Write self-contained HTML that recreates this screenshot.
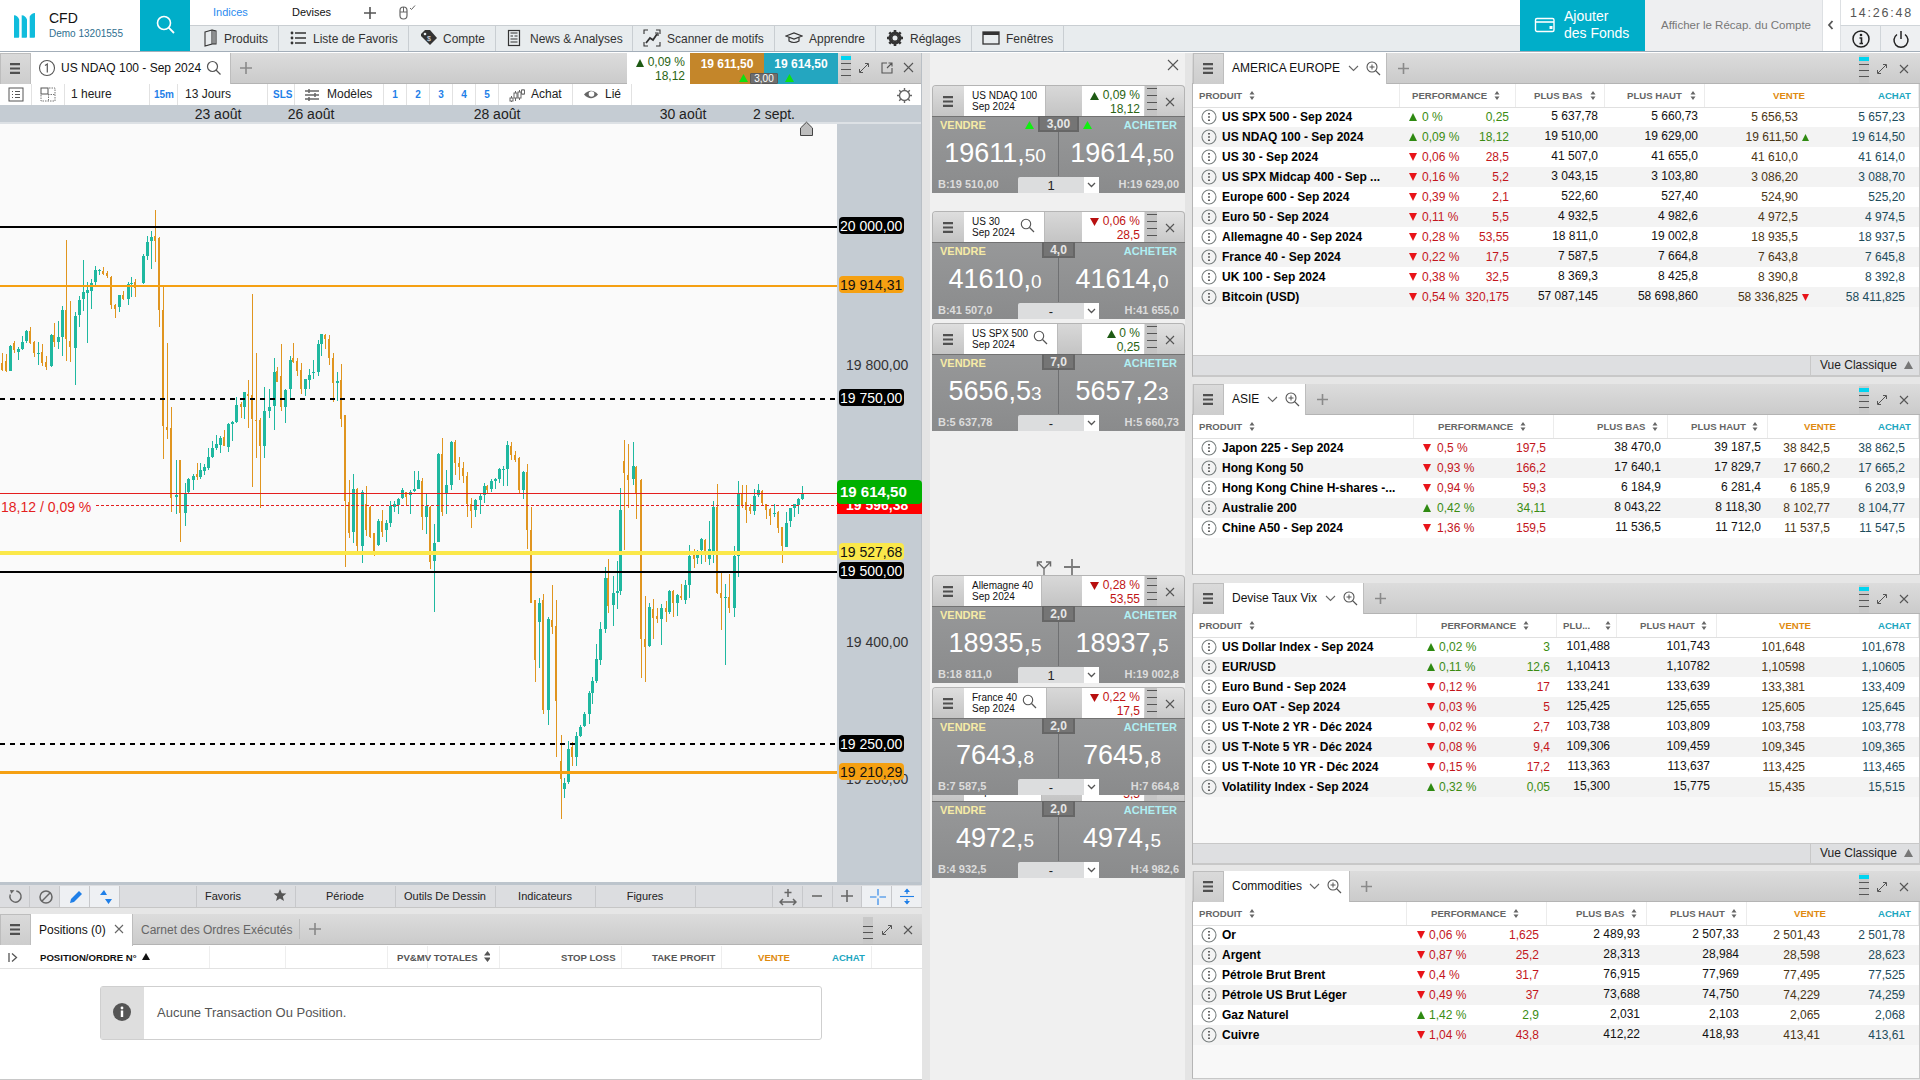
<!DOCTYPE html><html><head><meta charset="utf-8"><style>
*{margin:0;padding:0;box-sizing:border-box}
html,body{width:1920px;height:1080px;overflow:hidden;background:#e3e3e3;font-family:"Liberation Sans",sans-serif;color:#000}
div{position:absolute}
.b{font-weight:bold}
</style></head><body>
<div style="left:0px;top:52px;width:922px;height:856px;background:#fafafa"></div>
<div style="left:0px;top:53px;width:922px;height:31px;background:linear-gradient(#dcdcdc,#cbcbcb);border-bottom:1px solid #b4b4b4"></div>
<div style="left:0px;top:53px;width:31px;height:31px;background:linear-gradient(#dadada,#cdcdcd);border:1px solid #bdbdbd;border-bottom:none"></div>
<svg style="position:absolute;left:9px;top:63px;" width="14" height="13" viewBox="0 0 14 13"><path d="M1,1.2H11M1,5.5H11M1,9.8H11" stroke="#505050" stroke-width="2.2"/></svg>
<div style="left:31px;top:53px;width:200px;height:31px;background:#fff;border-right:1px solid #bdbdbd"></div>
<svg style="position:absolute;left:38px;top:59px;" width="18" height="18" viewBox="0 0 18 18"><circle cx="9" cy="9" r="7.5" fill="none" stroke="#555" stroke-width="1.1"/><path d="M7,6.5 L9.3,5 V13.5" fill="none" stroke="#555" stroke-width="1.2"/></svg>
<div style="left:61px;top:61px;white-space:nowrap;font-size:12px;color:#111;line-height:15px">US NDAQ 100 - Sep 2024</div>
<svg style="position:absolute;left:206px;top:60px;" width="16" height="16" viewBox="0 0 16 16"><circle cx="6.5" cy="6.5" r="5" fill="none" stroke="#555" stroke-width="1.2"/><line x1="10" y1="10" x2="14.5" y2="14.5" stroke="#555" stroke-width="1.3"/></svg>
<svg style="position:absolute;left:240px;top:62px;" width="12" height="12" viewBox="0 0 12 12"><path d="M6.0,0V12M0,6.0H12" stroke="#8a8a8a" stroke-width="1.6"/></svg>
<div style="left:627px;top:53px;width:63px;height:31px;background:#fff"></div>
<svg style="position:absolute;left:636px;top:59px;" width="8" height="8" viewBox="0 0 8 8"><path d="M0,8 L4,0 L8,8 Z" fill="#1e5a14"/></svg>
<div style="left:627px;top:56px;white-space:nowrap;font-size:12px;color:#2a6412;line-height:13px;width:58px;text-align:right">0,09 %</div>
<div style="left:627px;top:70px;white-space:nowrap;font-size:12px;color:#2a6412;line-height:13px;width:58px;text-align:right">18,12</div>
<div style="left:690px;top:53px;width:74px;height:31px;background:#c4862a"></div>
<div style="left:690px;top:57px;white-space:nowrap;font-size:12px;color:#fff;font-weight:bold;width:74px;text-align:center;line-height:15px">19 611,50</div>
<div style="left:764px;top:53px;width:74px;height:31px;background:#24a6c0"></div>
<div style="left:764px;top:57px;white-space:nowrap;font-size:12px;color:#fff;font-weight:bold;width:74px;text-align:center;line-height:15px">19 614,50</div>
<svg style="position:absolute;left:739px;top:74px;" width="9" height="8" viewBox="0 0 9 8"><path d="M0,8 L4.5,0 L9,8 Z" fill="#10e010"/></svg>
<svg style="position:absolute;left:785px;top:74px;" width="9" height="8" viewBox="0 0 9 8"><path d="M0,8 L4.5,0 L9,8 Z" fill="#10e010"/></svg>
<div style="left:750px;top:73px;width:28px;height:11px;background:#6e6e6e;border:1px solid #5a5a5a;border-radius:1px"></div>
<div style="left:750px;top:73px;white-space:nowrap;font-size:10px;color:#fff;width:28px;text-align:center;line-height:11px">3,00</div>
<div style="left:841px;top:54px;width:10px;height:28px;background:#c8c8c8"></div>
<div style="left:841px;top:56px;width:10px;height:4px;background:#00d4f0"></div>
<div style="left:841px;top:63px;width:10px;height:1px;background:#555"></div>
<div style="left:841px;top:69px;width:10px;height:1px;background:#555"></div>
<div style="left:841px;top:75px;width:10px;height:1px;background:#555"></div>
<svg style="position:absolute;left:858px;top:62px;" width="12" height="12" viewBox="0 0 12 12"><path d="M2,10 L10,2 M7,1.5H10.5V5 M1.5,7V10.5H5" fill="none" stroke="#555" stroke-width="1"/></svg>
<svg style="position:absolute;left:880px;top:61px;" width="14" height="14" viewBox="0 0 14 14"><path d="M7,2H2V12H12V7 M7,7 L12,2 M8.5,2H12V5.5" fill="none" stroke="#555" stroke-width="1.1"/></svg>
<svg style="position:absolute;left:903px;top:62px;" width="11" height="11" viewBox="0 0 11 11"><path d="M1,1 L10,10 M10,1 L1,10" stroke="#555" stroke-width="1.1"/></svg>
<div style="left:0px;top:84px;width:922px;height:21px;background:#fff"></div>
<div style="left:31px;top:84px;width:1px;height:21px;background:#e2e2e2"></div>
<div style="left:64px;top:84px;width:1px;height:21px;background:#e2e2e2"></div>
<div style="left:149px;top:84px;width:1px;height:21px;background:#e2e2e2"></div>
<div style="left:177px;top:84px;width:1px;height:21px;background:#e2e2e2"></div>
<div style="left:267px;top:84px;width:1px;height:21px;background:#e2e2e2"></div>
<div style="left:294px;top:84px;width:1px;height:21px;background:#e2e2e2"></div>
<div style="left:383px;top:84px;width:1px;height:21px;background:#e2e2e2"></div>
<div style="left:406px;top:84px;width:1px;height:21px;background:#e2e2e2"></div>
<div style="left:429px;top:84px;width:1px;height:21px;background:#e2e2e2"></div>
<div style="left:452px;top:84px;width:1px;height:21px;background:#e2e2e2"></div>
<div style="left:475px;top:84px;width:1px;height:21px;background:#e2e2e2"></div>
<div style="left:498px;top:84px;width:1px;height:21px;background:#e2e2e2"></div>
<div style="left:572px;top:84px;width:1px;height:21px;background:#e2e2e2"></div>
<div style="left:631px;top:84px;width:1px;height:21px;background:#e2e2e2"></div>
<svg style="position:absolute;left:8px;top:87px;" width="16" height="15" viewBox="0 0 16 15"><rect x="1" y="1" width="14" height="13" fill="none" stroke="#555" stroke-width="1"/><path d="M4,4.5H5M7,4.5H12M4,7.5H5M7,7.5H12M4,10.5H5M7,10.5H12" stroke="#555" stroke-width="1"/></svg>
<svg style="position:absolute;left:40px;top:87px;" width="17" height="15" viewBox="0 0 17 15"><rect x="1" y="1" width="7" height="6" fill="none" stroke="#555" stroke-width="1"/><path d="M9,1H15V14H1V8 M8,7.5H15 M8.5,7V14" fill="none" stroke="#777" stroke-width="1" stroke-dasharray="1.5,1"/></svg>
<div style="left:71px;top:87px;white-space:nowrap;font-size:12px;color:#222;line-height:15px">1 heure</div>
<div style="left:154px;top:89px;white-space:nowrap;font-size:10px;color:#1f7fe8;font-weight:bold;line-height:12px">15m</div>
<div style="left:185px;top:87px;white-space:nowrap;font-size:12px;color:#222;line-height:15px">13 Jours</div>
<div style="left:273px;top:89px;white-space:nowrap;font-size:10px;color:#1f7fe8;font-weight:bold;line-height:12px">SLS</div>
<svg style="position:absolute;left:304px;top:88px;" width="17" height="14" viewBox="0 0 17 14"><path d="M1,3H15M1,7H15M1,11H15" stroke="#666" stroke-width="1.3"/><path d="M5,1V5M11,5V9M5,9V13" stroke="#666" stroke-width="1.5"/></svg>
<div style="left:327px;top:87px;white-space:nowrap;font-size:12px;color:#222;line-height:15px">Modèles</div>
<div style="left:385px;top:89px;white-space:nowrap;font-size:10px;color:#1f7fe8;font-weight:bold;width:20px;text-align:center;line-height:12px">1</div>
<div style="left:408px;top:89px;white-space:nowrap;font-size:10px;color:#1f7fe8;font-weight:bold;width:20px;text-align:center;line-height:12px">2</div>
<div style="left:431px;top:89px;white-space:nowrap;font-size:10px;color:#1f7fe8;font-weight:bold;width:20px;text-align:center;line-height:12px">3</div>
<div style="left:454px;top:89px;white-space:nowrap;font-size:10px;color:#1f7fe8;font-weight:bold;width:20px;text-align:center;line-height:12px">4</div>
<div style="left:477px;top:89px;white-space:nowrap;font-size:10px;color:#1f7fe8;font-weight:bold;width:20px;text-align:center;line-height:12px">5</div>
<svg style="position:absolute;left:509px;top:87px;" width="17" height="16" viewBox="0 0 17 16"><path d="M2.5,9V15 M6.5,4V14 M10.5,3V13 M14,2V8" stroke="#666" stroke-width="1"/><rect x="1" y="11" width="3" height="3" fill="#fff" stroke="#666"/><rect x="5" y="6" width="3" height="5" fill="#fff" stroke="#666"/><rect x="9" y="5" width="3" height="6" fill="#fff" stroke="#666"/><rect x="12.5" y="3" width="3" height="4" fill="#fff" stroke="#666"/></svg>
<div style="left:531px;top:87px;white-space:nowrap;font-size:12px;color:#222;line-height:15px">Achat</div>
<svg style="position:absolute;left:583px;top:88px;" width="16" height="13" viewBox="0 0 16 13"><path d="M1,6.5 Q8,-1 15,6.5 Q8,14 1,6.5 Z" fill="#666"/><circle cx="8.5" cy="6" r="2.8" fill="#fff"/></svg>
<div style="left:605px;top:87px;white-space:nowrap;font-size:12px;color:#222;line-height:15px">Lié</div>
<svg style="position:absolute;left:896px;top:87px;" width="17" height="17" viewBox="0 0 17 17"><circle cx="8.5" cy="8.5" r="5" fill="none" stroke="#666" stroke-width="1.4"/><path d="M8.5,1V4M8.5,13V16M1,8.5H4M13,8.5H16M3.2,3.2L5.2,5.2M11.8,11.8L13.8,13.8M13.8,3.2L11.8,5.2M5.2,11.8L3.2,13.8" stroke="#666" stroke-width="1.4"/></svg>
<div style="left:0px;top:105px;width:922px;height:17px;background:#c5ccd3"></div>
<div style="left:178px;top:106px;white-space:nowrap;font-size:14px;color:#222;width:80px;text-align:center;line-height:17px">23 août</div>
<div style="left:271px;top:106px;white-space:nowrap;font-size:14px;color:#222;width:80px;text-align:center;line-height:17px">26 août</div>
<div style="left:457px;top:106px;white-space:nowrap;font-size:14px;color:#222;width:80px;text-align:center;line-height:17px">28 août</div>
<div style="left:643px;top:106px;white-space:nowrap;font-size:14px;color:#222;width:80px;text-align:center;line-height:17px">30 août</div>
<div style="left:734px;top:106px;white-space:nowrap;font-size:14px;color:#222;width:80px;text-align:center;line-height:17px">2 sept.</div>
<div style="left:0px;top:122px;width:922px;height:2px;background:#dde1e5"></div>
<div style="left:0px;top:124px;width:837px;height:758px;background:#fafafa"></div>
<div style="left:837px;top:124px;width:85px;height:758px;background:#c5ccd3"></div>
<div style="left:921px;top:52px;width:1px;height:856px;background:#b9bfc5"></div>
<svg style="position:absolute;left:0;top:0" width="837" height="883" viewBox="0 0 837 883" shape-rendering="crispEdges"><rect x="2" y="353.0" width="1" height="18.1" fill="#e0951f"/><rect x="1" y="363.3" width="2" height="6.5" fill="#e0951f"/><rect x="6" y="354.3" width="1" height="18.1" fill="#e0951f"/><rect x="5" y="360.7" width="2" height="10.4" fill="#e0951f"/><rect x="10" y="345.2" width="1" height="25.9" fill="#1fb8a0"/><rect x="9" y="345.7" width="3" height="24.9" fill="#1fb8a0"/><rect x="14" y="341.3" width="1" height="11.7" fill="#e0951f"/><rect x="13" y="342.6" width="2" height="7.8" fill="#e0951f"/><rect x="18" y="346.5" width="1" height="13.0" fill="#1fb8a0"/><rect x="17" y="349.1" width="3" height="2.6" fill="#1fb8a0"/><rect x="22" y="336.1" width="1" height="14.3" fill="#1fb8a0"/><rect x="21" y="342.1" width="3" height="7.0" fill="#1fb8a0"/><rect x="26" y="329.6" width="1" height="13.0" fill="#1fb8a0"/><rect x="25" y="330.9" width="3" height="10.4" fill="#1fb8a0"/><rect x="30" y="327.0" width="1" height="16.9" fill="#e0951f"/><rect x="29" y="330.9" width="2" height="11.7" fill="#e0951f"/><rect x="34" y="341.3" width="1" height="15.6" fill="#e0951f"/><rect x="33" y="342.1" width="2" height="10.9" fill="#e0951f"/><rect x="38" y="342.1" width="1" height="22.6" fill="#1fb8a0"/><rect x="37" y="353.0" width="3" height="1.3" fill="#1fb8a0"/><rect x="42" y="343.9" width="1" height="22.0" fill="#e0951f"/><rect x="41" y="351.7" width="2" height="11.7" fill="#e0951f"/><rect x="46" y="355.6" width="1" height="14.3" fill="#e0951f"/><rect x="45" y="362.0" width="2" height="5.2" fill="#e0951f"/><rect x="51" y="334.3" width="1" height="32.9" fill="#1fb8a0"/><rect x="50" y="335.3" width="3" height="31.1" fill="#1fb8a0"/><rect x="54" y="323.2" width="1" height="23.3" fill="#e0951f"/><rect x="53" y="334.8" width="2" height="7.3" fill="#e0951f"/><rect x="58" y="320.6" width="1" height="28.5" fill="#1fb8a0"/><rect x="57" y="336.9" width="3" height="5.2" fill="#1fb8a0"/><rect x="62" y="306.3" width="1" height="49.3" fill="#1fb8a0"/><rect x="61" y="310.2" width="3" height="26.7" fill="#1fb8a0"/><rect x="66" y="240.2" width="1" height="120.6" fill="#e0951f"/><rect x="65" y="310.2" width="2" height="28.5" fill="#e0951f"/><rect x="70" y="301.1" width="1" height="60.9" fill="#e0951f"/><rect x="69" y="341.3" width="2" height="5.2" fill="#e0951f"/><rect x="75" y="311.5" width="1" height="73.1" fill="#1fb8a0"/><rect x="74" y="315.9" width="3" height="31.9" fill="#1fb8a0"/><rect x="79" y="295.9" width="1" height="31.1" fill="#1fb8a0"/><rect x="78" y="299.8" width="3" height="15.6" fill="#1fb8a0"/><rect x="83" y="260.2" width="1" height="50.8" fill="#1fb8a0"/><rect x="82" y="292.0" width="3" height="7.0" fill="#1fb8a0"/><rect x="87" y="281.7" width="1" height="60.9" fill="#1fb8a0"/><rect x="86" y="290.2" width="3" height="2.6" fill="#1fb8a0"/><rect x="91" y="279.1" width="1" height="29.8" fill="#1fb8a0"/><rect x="90" y="283.0" width="3" height="7.8" fill="#1fb8a0"/><rect x="95" y="266.1" width="1" height="18.9" fill="#1fb8a0"/><rect x="94" y="269.5" width="3" height="12.2" fill="#1fb8a0"/><rect x="99" y="268.7" width="1" height="6.5" fill="#1fb8a0"/><rect x="98" y="269.5" width="3" height="1.0" fill="#1fb8a0"/><rect x="103" y="266.9" width="1" height="7.8" fill="#e0951f"/><rect x="102" y="270.5" width="2" height="3.4" fill="#e0951f"/><rect x="107" y="271.3" width="1" height="6.5" fill="#e0951f"/><rect x="106" y="272.6" width="2" height="3.1" fill="#e0951f"/><rect x="111" y="275.7" width="1" height="33.2" fill="#e0951f"/><rect x="110" y="276.5" width="2" height="28.5" fill="#e0951f"/><rect x="115" y="303.7" width="1" height="14.3" fill="#e0951f"/><rect x="114" y="305.0" width="2" height="3.9" fill="#e0951f"/><rect x="119" y="294.6" width="1" height="17.4" fill="#1fb8a0"/><rect x="118" y="295.2" width="3" height="11.7" fill="#1fb8a0"/><rect x="123" y="290.7" width="1" height="9.1" fill="#e0951f"/><rect x="122" y="294.6" width="2" height="3.9" fill="#e0951f"/><rect x="128" y="282.4" width="1" height="22.6" fill="#1fb8a0"/><rect x="127" y="283.5" width="3" height="15.0" fill="#1fb8a0"/><rect x="131" y="276.5" width="1" height="20.7" fill="#1fb8a0"/><rect x="130" y="283.0" width="3" height="1.3" fill="#1fb8a0"/><rect x="135" y="279.1" width="1" height="17.4" fill="#e0951f"/><rect x="134" y="282.4" width="2" height="5.7" fill="#e0951f"/><rect x="143" y="254.4" width="1" height="29.8" fill="#1fb8a0"/><rect x="142" y="255.7" width="3" height="27.7" fill="#1fb8a0"/><rect x="147" y="236.3" width="1" height="23.3" fill="#1fb8a0"/><rect x="146" y="242.0" width="3" height="13.7" fill="#1fb8a0"/><rect x="151" y="231.1" width="1" height="37.6" fill="#1fb8a0"/><rect x="150" y="237.1" width="3" height="3.9" fill="#1fb8a0"/><rect x="155" y="209.9" width="1" height="52.4" fill="#e0951f"/><rect x="154" y="236.3" width="2" height="4.7" fill="#e0951f"/><rect x="159" y="236.8" width="1" height="90.2" fill="#e0951f"/><rect x="158" y="238.4" width="2" height="71.8" fill="#e0951f"/><rect x="163" y="286.9" width="1" height="172.4" fill="#e0951f"/><rect x="162" y="310.2" width="2" height="115.4" fill="#e0951f"/><rect x="167" y="342.6" width="1" height="95.9" fill="#e0951f"/><rect x="166" y="426.9" width="2" height="2.6" fill="#e0951f"/><rect x="171" y="407.4" width="1" height="104.4" fill="#e0951f"/><rect x="170" y="428.2" width="2" height="69.4" fill="#e0951f"/><rect x="176" y="460.0" width="1" height="54.4" fill="#1fb8a0"/><rect x="175" y="495.0" width="3" height="1.8" fill="#1fb8a0"/><rect x="180" y="460.0" width="1" height="81.7" fill="#e0951f"/><rect x="179" y="460.0" width="2" height="53.2" fill="#e0951f"/><rect x="185" y="483.3" width="1" height="42.8" fill="#1fb8a0"/><rect x="184" y="493.7" width="3" height="19.4" fill="#1fb8a0"/><rect x="188" y="478.1" width="1" height="15.6" fill="#1fb8a0"/><rect x="187" y="479.4" width="3" height="13.0" fill="#1fb8a0"/><rect x="193" y="474.3" width="1" height="15.6" fill="#1fb8a0"/><rect x="192" y="475.6" width="3" height="3.9" fill="#1fb8a0"/><rect x="197" y="462.6" width="1" height="16.9" fill="#e0951f"/><rect x="196" y="474.3" width="2" height="2.6" fill="#e0951f"/><rect x="200" y="462.6" width="1" height="16.1" fill="#1fb8a0"/><rect x="199" y="470.4" width="3" height="7.0" fill="#1fb8a0"/><rect x="204" y="463.9" width="1" height="10.9" fill="#1fb8a0"/><rect x="203" y="467.0" width="3" height="3.9" fill="#1fb8a0"/><rect x="208" y="447.6" width="1" height="22.8" fill="#1fb8a0"/><rect x="207" y="456.7" width="3" height="11.7" fill="#1fb8a0"/><rect x="212" y="441.1" width="1" height="16.9" fill="#1fb8a0"/><rect x="211" y="447.6" width="3" height="9.1" fill="#1fb8a0"/><rect x="216" y="434.6" width="1" height="15.6" fill="#1fb8a0"/><rect x="215" y="443.7" width="3" height="4.7" fill="#1fb8a0"/><rect x="220" y="435.9" width="1" height="16.9" fill="#1fb8a0"/><rect x="219" y="438.0" width="3" height="7.0" fill="#1fb8a0"/><rect x="224" y="429.5" width="1" height="16.9" fill="#e0951f"/><rect x="223" y="437.2" width="2" height="9.1" fill="#e0951f"/><rect x="228" y="423.0" width="1" height="28.5" fill="#1fb8a0"/><rect x="227" y="423.5" width="3" height="23.3" fill="#1fb8a0"/><rect x="232" y="420.9" width="1" height="20.2" fill="#1fb8a0"/><rect x="231" y="421.7" width="3" height="2.6" fill="#1fb8a0"/><rect x="236" y="396.5" width="1" height="26.4" fill="#1fb8a0"/><rect x="235" y="404.8" width="3" height="16.9" fill="#1fb8a0"/><rect x="241" y="402.2" width="1" height="15.6" fill="#e0951f"/><rect x="240" y="403.5" width="2" height="3.9" fill="#e0951f"/><rect x="244" y="391.9" width="1" height="27.2" fill="#1fb8a0"/><rect x="243" y="392.4" width="3" height="15.0" fill="#1fb8a0"/><rect x="248" y="380.2" width="1" height="48.0" fill="#e0951f"/><rect x="247" y="393.9" width="2" height="1.8" fill="#e0951f"/><rect x="252" y="293.9" width="1" height="193.4" fill="#e0951f"/><rect x="251" y="394.5" width="2" height="24.6" fill="#e0951f"/><rect x="256" y="353.0" width="1" height="105.0" fill="#e0951f"/><rect x="255" y="419.9" width="2" height="1.0" fill="#e0951f"/><rect x="260" y="417.8" width="1" height="90.2" fill="#e0951f"/><rect x="259" y="420.4" width="2" height="25.9" fill="#e0951f"/><rect x="264" y="386.7" width="1" height="71.3" fill="#1fb8a0"/><rect x="263" y="410.5" width="3" height="35.8" fill="#1fb8a0"/><rect x="269" y="389.3" width="1" height="28.5" fill="#1fb8a0"/><rect x="268" y="406.9" width="3" height="3.6" fill="#1fb8a0"/><rect x="274" y="358.2" width="1" height="71.3" fill="#1fb8a0"/><rect x="273" y="371.6" width="3" height="34.5" fill="#1fb8a0"/><rect x="277" y="367.2" width="1" height="14.3" fill="#e0951f"/><rect x="276" y="371.1" width="2" height="10.4" fill="#e0951f"/><rect x="281" y="343.9" width="1" height="66.7" fill="#e0951f"/><rect x="280" y="376.3" width="2" height="30.9" fill="#e0951f"/><rect x="285" y="389.1" width="1" height="33.9" fill="#1fb8a0"/><rect x="284" y="390.4" width="3" height="17.0" fill="#1fb8a0"/><rect x="290" y="355.6" width="1" height="44.1" fill="#1fb8a0"/><rect x="289" y="359.5" width="3" height="29.8" fill="#1fb8a0"/><rect x="293" y="342.6" width="1" height="20.7" fill="#e0951f"/><rect x="292" y="358.2" width="2" height="3.9" fill="#e0951f"/><rect x="297" y="358.2" width="1" height="18.1" fill="#e0951f"/><rect x="296" y="360.7" width="2" height="10.4" fill="#e0951f"/><rect x="301" y="363.3" width="1" height="31.1" fill="#e0951f"/><rect x="300" y="369.8" width="2" height="19.4" fill="#e0951f"/><rect x="305" y="378.9" width="1" height="16.9" fill="#1fb8a0"/><rect x="304" y="378.9" width="3" height="10.4" fill="#1fb8a0"/><rect x="309" y="368.5" width="1" height="20.7" fill="#1fb8a0"/><rect x="308" y="375.0" width="3" height="5.2" fill="#1fb8a0"/><rect x="313" y="359.5" width="1" height="19.4" fill="#1fb8a0"/><rect x="312" y="371.6" width="3" height="1.6" fill="#1fb8a0"/><rect x="318" y="340.0" width="1" height="36.3" fill="#1fb8a0"/><rect x="317" y="343.9" width="3" height="27.7" fill="#1fb8a0"/><rect x="321" y="333.5" width="1" height="22.0" fill="#1fb8a0"/><rect x="320" y="334.3" width="3" height="9.6" fill="#1fb8a0"/><rect x="325" y="334.3" width="1" height="14.8" fill="#e0951f"/><rect x="324" y="334.8" width="2" height="3.9" fill="#e0951f"/><rect x="329" y="334.8" width="1" height="29.8" fill="#e0951f"/><rect x="328" y="338.7" width="2" height="19.4" fill="#e0951f"/><rect x="333" y="353.0" width="1" height="49.3" fill="#e0951f"/><rect x="332" y="358.2" width="2" height="24.4" fill="#e0951f"/><rect x="337" y="371.6" width="1" height="29.1" fill="#1fb8a0"/><rect x="336" y="381.0" width="3" height="1.6" fill="#1fb8a0"/><rect x="341" y="363.9" width="1" height="63.0" fill="#e0951f"/><rect x="340" y="380.0" width="2" height="39.1" fill="#e0951f"/><rect x="345" y="414.7" width="1" height="152.0" fill="#e0951f"/><rect x="344" y="415.2" width="2" height="85.4" fill="#e0951f"/><rect x="349" y="479.8" width="1" height="58.3" fill="#e0951f"/><rect x="348" y="501.9" width="2" height="31.1" fill="#e0951f"/><rect x="353" y="473.9" width="1" height="69.5" fill="#1fb8a0"/><rect x="352" y="488.9" width="3" height="42.8" fill="#1fb8a0"/><rect x="357" y="488.4" width="1" height="62.7" fill="#e0951f"/><rect x="356" y="488.9" width="2" height="57.0" fill="#e0951f"/><rect x="362" y="490.2" width="1" height="72.6" fill="#1fb8a0"/><rect x="361" y="491.5" width="3" height="54.4" fill="#1fb8a0"/><rect x="366" y="486.3" width="1" height="49.3" fill="#e0951f"/><rect x="365" y="504.4" width="2" height="25.9" fill="#e0951f"/><rect x="370" y="505.7" width="1" height="32.4" fill="#e0951f"/><rect x="369" y="507.0" width="2" height="29.8" fill="#e0951f"/><rect x="374" y="533.0" width="1" height="22.8" fill="#e0951f"/><rect x="373" y="533.0" width="2" height="18.1" fill="#e0951f"/><rect x="378" y="518.7" width="1" height="27.2" fill="#1fb8a0"/><rect x="377" y="521.3" width="3" height="23.3" fill="#1fb8a0"/><rect x="382" y="509.6" width="1" height="27.2" fill="#e0951f"/><rect x="381" y="521.3" width="2" height="10.4" fill="#e0951f"/><rect x="386" y="520.0" width="1" height="22.0" fill="#1fb8a0"/><rect x="385" y="522.6" width="3" height="7.8" fill="#1fb8a0"/><rect x="390" y="500.6" width="1" height="25.9" fill="#1fb8a0"/><rect x="389" y="505.7" width="3" height="16.9" fill="#1fb8a0"/><rect x="394" y="500.6" width="1" height="11.7" fill="#1fb8a0"/><rect x="393" y="504.4" width="3" height="2.6" fill="#1fb8a0"/><rect x="398" y="498.0" width="1" height="15.6" fill="#1fb8a0"/><rect x="397" y="499.3" width="3" height="5.2" fill="#1fb8a0"/><rect x="402" y="488.4" width="1" height="10.9" fill="#1fb8a0"/><rect x="401" y="490.2" width="3" height="7.8" fill="#1fb8a0"/><rect x="406" y="491.5" width="1" height="13.0" fill="#e0951f"/><rect x="405" y="491.5" width="2" height="5.2" fill="#e0951f"/><rect x="410" y="490.2" width="1" height="23.3" fill="#1fb8a0"/><rect x="409" y="492.0" width="3" height="3.4" fill="#1fb8a0"/><rect x="414" y="471.3" width="1" height="20.2" fill="#1fb8a0"/><rect x="413" y="488.9" width="3" height="2.1" fill="#1fb8a0"/><rect x="418" y="470.7" width="1" height="18.1" fill="#1fb8a0"/><rect x="417" y="479.8" width="3" height="9.1" fill="#1fb8a0"/><rect x="422" y="478.0" width="1" height="52.4" fill="#e0951f"/><rect x="421" y="481.1" width="2" height="36.3" fill="#e0951f"/><rect x="426" y="494.1" width="1" height="40.2" fill="#1fb8a0"/><rect x="425" y="505.7" width="3" height="11.7" fill="#1fb8a0"/><rect x="430" y="505.7" width="1" height="63.0" fill="#e0951f"/><rect x="429" y="506.5" width="2" height="55.0" fill="#e0951f"/><rect x="434" y="523.9" width="1" height="87.6" fill="#1fb8a0"/><rect x="433" y="543.3" width="3" height="18.1" fill="#1fb8a0"/><rect x="438" y="453.1" width="1" height="88.9" fill="#1fb8a0"/><rect x="437" y="453.9" width="3" height="88.2" fill="#1fb8a0"/><rect x="442" y="438.3" width="1" height="77.8" fill="#e0951f"/><rect x="441" y="453.9" width="2" height="58.3" fill="#e0951f"/><rect x="446" y="470.2" width="1" height="44.1" fill="#1fb8a0"/><rect x="445" y="485.0" width="3" height="9.1" fill="#1fb8a0"/><rect x="451" y="440.9" width="1" height="49.3" fill="#1fb8a0"/><rect x="450" y="441.7" width="3" height="43.3" fill="#1fb8a0"/><rect x="455" y="440.2" width="1" height="34.5" fill="#e0951f"/><rect x="454" y="442.2" width="2" height="20.7" fill="#e0951f"/><rect x="459" y="456.5" width="1" height="23.3" fill="#e0951f"/><rect x="458" y="463.0" width="2" height="3.9" fill="#e0951f"/><rect x="463" y="461.7" width="1" height="21.5" fill="#e0951f"/><rect x="462" y="467.6" width="2" height="8.3" fill="#e0951f"/><rect x="467" y="472.0" width="1" height="45.4" fill="#e0951f"/><rect x="466" y="475.9" width="2" height="28.5" fill="#e0951f"/><rect x="471" y="498.0" width="1" height="30.3" fill="#e0951f"/><rect x="470" y="504.4" width="2" height="6.5" fill="#e0951f"/><rect x="475" y="498.7" width="1" height="18.1" fill="#1fb8a0"/><rect x="474" y="499.8" width="3" height="9.9" fill="#1fb8a0"/><rect x="480" y="494.1" width="1" height="19.4" fill="#1fb8a0"/><rect x="479" y="496.2" width="3" height="3.6" fill="#1fb8a0"/><rect x="484" y="483.2" width="1" height="20.0" fill="#1fb8a0"/><rect x="483" y="486.3" width="3" height="9.1" fill="#1fb8a0"/><rect x="487" y="485.0" width="1" height="9.1" fill="#e0951f"/><rect x="486" y="486.3" width="2" height="3.9" fill="#e0951f"/><rect x="491" y="478.5" width="1" height="13.0" fill="#1fb8a0"/><rect x="490" y="480.6" width="3" height="8.3" fill="#1fb8a0"/><rect x="495" y="478.0" width="1" height="10.9" fill="#1fb8a0"/><rect x="494" y="478.5" width="3" height="2.1" fill="#1fb8a0"/><rect x="499" y="468.2" width="1" height="14.3" fill="#1fb8a0"/><rect x="498" y="469.4" width="3" height="9.1" fill="#1fb8a0"/><rect x="503" y="466.1" width="1" height="19.7" fill="#1fb8a0"/><rect x="502" y="468.7" width="3" height="1.6" fill="#1fb8a0"/><rect x="507" y="440.9" width="1" height="44.9" fill="#1fb8a0"/><rect x="506" y="444.8" width="3" height="23.9" fill="#1fb8a0"/><rect x="511" y="441.7" width="1" height="18.7" fill="#e0951f"/><rect x="510" y="446.1" width="2" height="9.1" fill="#e0951f"/><rect x="515" y="450.5" width="1" height="11.1" fill="#e0951f"/><rect x="514" y="455.2" width="2" height="5.2" fill="#e0951f"/><rect x="519" y="457.3" width="1" height="36.8" fill="#e0951f"/><rect x="518" y="457.8" width="2" height="32.4" fill="#e0951f"/><rect x="523" y="470.7" width="1" height="28.0" fill="#1fb8a0"/><rect x="522" y="472.0" width="3" height="18.1" fill="#1fb8a0"/><rect x="527" y="463.5" width="1" height="85.0" fill="#e0951f"/><rect x="526" y="472.0" width="2" height="58.3" fill="#e0951f"/><rect x="531" y="507.0" width="1" height="95.9" fill="#e0951f"/><rect x="530" y="530.4" width="2" height="72.2" fill="#e0951f"/><rect x="535" y="600.0" width="1" height="81.7" fill="#e0951f"/><rect x="534" y="600.0" width="2" height="60.0" fill="#e0951f"/><rect x="539" y="597.8" width="1" height="70.1" fill="#1fb8a0"/><rect x="538" y="602.6" width="3" height="19.8" fill="#1fb8a0"/><rect x="543" y="593.9" width="1" height="120.2" fill="#e0951f"/><rect x="542" y="600.0" width="2" height="110.2" fill="#e0951f"/><rect x="548" y="616.9" width="1" height="107.6" fill="#1fb8a0"/><rect x="547" y="618.5" width="3" height="91.7" fill="#1fb8a0"/><rect x="552" y="584.8" width="1" height="48.9" fill="#e0951f"/><rect x="551" y="619.8" width="2" height="7.4" fill="#e0951f"/><rect x="556" y="600.0" width="1" height="156.9" fill="#e0951f"/><rect x="555" y="625.9" width="2" height="75.2" fill="#e0951f"/><rect x="561" y="734.8" width="1" height="84.3" fill="#e0951f"/><rect x="560" y="760.7" width="2" height="18.1" fill="#e0951f"/><rect x="564" y="777.6" width="1" height="20.0" fill="#1fb8a0"/><rect x="563" y="782.8" width="3" height="6.0" fill="#1fb8a0"/><rect x="568" y="741.3" width="1" height="42.3" fill="#1fb8a0"/><rect x="567" y="749.1" width="3" height="32.4" fill="#1fb8a0"/><rect x="572" y="742.1" width="1" height="23.9" fill="#e0951f"/><rect x="571" y="746.5" width="2" height="10.4" fill="#e0951f"/><rect x="576" y="732.2" width="1" height="33.7" fill="#1fb8a0"/><rect x="575" y="736.1" width="3" height="20.7" fill="#1fb8a0"/><rect x="580" y="725.0" width="1" height="12.4" fill="#1fb8a0"/><rect x="579" y="726.5" width="3" height="9.6" fill="#1fb8a0"/><rect x="584" y="711.5" width="1" height="15.6" fill="#1fb8a0"/><rect x="583" y="714.1" width="3" height="11.7" fill="#1fb8a0"/><rect x="589" y="690.7" width="1" height="33.7" fill="#1fb8a0"/><rect x="588" y="692.8" width="3" height="21.3" fill="#1fb8a0"/><rect x="592" y="676.5" width="1" height="27.2" fill="#1fb8a0"/><rect x="591" y="680.9" width="3" height="12.4" fill="#1fb8a0"/><rect x="596" y="644.1" width="1" height="38.4" fill="#1fb8a0"/><rect x="595" y="658.7" width="3" height="22.2" fill="#1fb8a0"/><rect x="600" y="622.0" width="1" height="43.3" fill="#1fb8a0"/><rect x="599" y="628.9" width="3" height="31.1" fill="#1fb8a0"/><rect x="605" y="566.7" width="1" height="66.1" fill="#1fb8a0"/><rect x="604" y="578.3" width="3" height="50.2" fill="#1fb8a0"/><rect x="608" y="558.9" width="1" height="54.1" fill="#e0951f"/><rect x="607" y="578.3" width="2" height="27.2" fill="#e0951f"/><rect x="613" y="575.7" width="1" height="50.2" fill="#1fb8a0"/><rect x="612" y="593.1" width="3" height="12.1" fill="#1fb8a0"/><rect x="617" y="561.0" width="1" height="48.1" fill="#1fb8a0"/><rect x="616" y="591.3" width="3" height="1.8" fill="#1fb8a0"/><rect x="620" y="487.6" width="1" height="107.1" fill="#1fb8a0"/><rect x="619" y="509.6" width="3" height="81.7" fill="#1fb8a0"/><rect x="624" y="440.2" width="1" height="109.7" fill="#e0951f"/><rect x="623" y="460.9" width="2" height="12.4" fill="#e0951f"/><rect x="628" y="444.3" width="1" height="63.3" fill="#e0951f"/><rect x="627" y="474.6" width="2" height="5.2" fill="#e0951f"/><rect x="633" y="442.2" width="1" height="42.8" fill="#1fb8a0"/><rect x="632" y="465.6" width="3" height="13.0" fill="#1fb8a0"/><rect x="636" y="466.1" width="1" height="52.6" fill="#e0951f"/><rect x="635" y="466.9" width="2" height="27.2" fill="#e0951f"/><rect x="641" y="479.0" width="1" height="198.7" fill="#e0951f"/><rect x="640" y="479.8" width="2" height="159.5" fill="#e0951f"/><rect x="645" y="595.7" width="1" height="86.7" fill="#e0951f"/><rect x="644" y="639.3" width="2" height="7.8" fill="#e0951f"/><rect x="649" y="602.6" width="1" height="44.5" fill="#1fb8a0"/><rect x="648" y="606.5" width="3" height="39.3" fill="#1fb8a0"/><rect x="653" y="599.1" width="1" height="40.2" fill="#e0951f"/><rect x="652" y="608.7" width="2" height="9.5" fill="#e0951f"/><rect x="657" y="608.2" width="1" height="14.3" fill="#e0951f"/><rect x="656" y="615.9" width="2" height="3.5" fill="#e0951f"/><rect x="661" y="603.9" width="1" height="40.7" fill="#1fb8a0"/><rect x="660" y="608.2" width="3" height="10.5" fill="#1fb8a0"/><rect x="666" y="600.9" width="1" height="21.5" fill="#e0951f"/><rect x="665" y="608.2" width="2" height="3.5" fill="#e0951f"/><rect x="669" y="590.0" width="1" height="24.3" fill="#1fb8a0"/><rect x="668" y="590.5" width="3" height="21.1" fill="#1fb8a0"/><rect x="673" y="590.0" width="1" height="27.2" fill="#e0951f"/><rect x="672" y="591.3" width="2" height="11.3" fill="#e0951f"/><rect x="677" y="593.9" width="1" height="21.7" fill="#1fb8a0"/><rect x="676" y="594.7" width="3" height="8.4" fill="#1fb8a0"/><rect x="681" y="584.3" width="1" height="16.1" fill="#e0951f"/><rect x="680" y="595.7" width="2" height="2.1" fill="#e0951f"/><rect x="685" y="579.6" width="1" height="23.9" fill="#1fb8a0"/><rect x="684" y="584.8" width="3" height="15.0" fill="#1fb8a0"/><rect x="689" y="544.6" width="1" height="53.7" fill="#1fb8a0"/><rect x="688" y="555.8" width="3" height="29.0" fill="#1fb8a0"/><rect x="694" y="548.5" width="1" height="19.4" fill="#e0951f"/><rect x="693" y="551.1" width="2" height="7.8" fill="#e0951f"/><rect x="697" y="549.8" width="1" height="14.3" fill="#1fb8a0"/><rect x="696" y="553.2" width="3" height="4.4" fill="#1fb8a0"/><rect x="701" y="537.6" width="1" height="25.9" fill="#1fb8a0"/><rect x="700" y="538.7" width="3" height="11.1" fill="#1fb8a0"/><rect x="705" y="538.7" width="1" height="22.8" fill="#e0951f"/><rect x="704" y="539.5" width="2" height="13.0" fill="#e0951f"/><rect x="709" y="521.3" width="1" height="44.1" fill="#1fb8a0"/><rect x="708" y="548.5" width="3" height="10.4" fill="#1fb8a0"/><rect x="713" y="500.6" width="1" height="62.2" fill="#1fb8a0"/><rect x="712" y="507.0" width="3" height="44.1" fill="#1fb8a0"/><rect x="717" y="483.7" width="1" height="110.2" fill="#e0951f"/><rect x="716" y="507.0" width="2" height="85.6" fill="#e0951f"/><rect x="721" y="570.6" width="1" height="59.6" fill="#e0951f"/><rect x="720" y="592.6" width="2" height="5.2" fill="#e0951f"/><rect x="725" y="583.5" width="1" height="81.7" fill="#1fb8a0"/><rect x="724" y="596.5" width="3" height="1.3" fill="#1fb8a0"/><rect x="729" y="573.9" width="1" height="39.4" fill="#e0951f"/><rect x="728" y="596.5" width="2" height="11.7" fill="#e0951f"/><rect x="734" y="545.9" width="1" height="71.3" fill="#1fb8a0"/><rect x="733" y="556.3" width="3" height="51.9" fill="#1fb8a0"/><rect x="738" y="480.6" width="1" height="96.4" fill="#1fb8a0"/><rect x="737" y="493.6" width="3" height="62.7" fill="#1fb8a0"/><rect x="742" y="485.0" width="1" height="23.3" fill="#e0951f"/><rect x="741" y="494.1" width="2" height="11.7" fill="#e0951f"/><rect x="746" y="485.0" width="1" height="37.6" fill="#e0951f"/><rect x="745" y="501.9" width="2" height="7.8" fill="#e0951f"/><rect x="750" y="504.4" width="1" height="9.1" fill="#e0951f"/><rect x="749" y="507.0" width="2" height="3.9" fill="#e0951f"/><rect x="754" y="488.9" width="1" height="25.9" fill="#1fb8a0"/><rect x="753" y="496.2" width="3" height="14.8" fill="#1fb8a0"/><rect x="758" y="483.7" width="1" height="13.0" fill="#1fb8a0"/><rect x="757" y="490.2" width="3" height="5.2" fill="#1fb8a0"/><rect x="762" y="490.2" width="1" height="14.3" fill="#e0951f"/><rect x="761" y="491.0" width="2" height="12.2" fill="#e0951f"/><rect x="766" y="503.9" width="1" height="14.8" fill="#e0951f"/><rect x="765" y="504.4" width="2" height="5.2" fill="#e0951f"/><rect x="770" y="508.3" width="1" height="16.9" fill="#e0951f"/><rect x="769" y="509.1" width="2" height="7.0" fill="#e0951f"/><rect x="774" y="503.9" width="1" height="13.5" fill="#1fb8a0"/><rect x="773" y="512.7" width="3" height="1.0" fill="#1fb8a0"/><rect x="778" y="510.9" width="1" height="22.0" fill="#e0951f"/><rect x="777" y="512.2" width="2" height="15.6" fill="#e0951f"/><rect x="782" y="526.5" width="1" height="36.3" fill="#e0951f"/><rect x="781" y="527.3" width="2" height="18.7" fill="#e0951f"/><rect x="786" y="512.2" width="1" height="35.0" fill="#1fb8a0"/><rect x="785" y="522.6" width="3" height="23.9" fill="#1fb8a0"/><rect x="790" y="507.6" width="1" height="18.9" fill="#1fb8a0"/><rect x="789" y="508.3" width="3" height="13.0" fill="#1fb8a0"/><rect x="794" y="503.9" width="1" height="13.0" fill="#1fb8a0"/><rect x="793" y="504.4" width="3" height="3.9" fill="#1fb8a0"/><rect x="798" y="498.0" width="1" height="15.6" fill="#1fb8a0"/><rect x="797" y="499.3" width="3" height="5.2" fill="#1fb8a0"/><rect x="802" y="485.8" width="1" height="14.0" fill="#1fb8a0"/><rect x="801" y="494.1" width="3" height="4.7" fill="#1fb8a0"/></svg>
<svg style="position:absolute;left:799px;top:121px;" width="15" height="16" viewBox="0 0 15 16"><path d="M1.5,14.5 V7 L7.5,1.2 L13.5,7 V14.5 Z" fill="#bdbdbd" stroke="#444" stroke-width="1"/></svg>
<div style="left:846px;top:357px;white-space:nowrap;font-size:14px;color:#333;line-height:16px">19 800,00</div>
<div style="left:846px;top:634px;white-space:nowrap;font-size:14px;color:#333;line-height:16px">19 400,00</div>
<div style="left:846px;top:771px;white-space:nowrap;font-size:14px;color:#333;line-height:16px">19 200,00</div>
<div style="left:0px;top:226px;width:837px;height:2px;background:#000"></div>
<div style="left:839px;top:217px;width:65px;height:17px;background:#000;border-radius:4px"></div>
<div style="left:840px;top:218px;white-space:nowrap;font-size:14px;color:#fff;line-height:17px">20 000,00</div>
<div style="left:0px;top:285px;width:837px;height:2px;background:#f5a012"></div>
<div style="left:839px;top:276px;width:65px;height:17px;background:#f5a012;border-radius:4px"></div>
<div style="left:840px;top:277px;white-space:nowrap;font-size:14px;color:#111;line-height:17px">19 914,31</div>
<svg style="position:absolute;left:0px;top:398px;shape-rendering:crispEdges" width="837" height="2" viewBox="0 0 837 2"><line x1="0" y1="1.0" x2="837" y2="1.0" stroke="#000" stroke-width="2" stroke-dasharray="5,5"/></svg>
<div style="left:839px;top:389px;width:65px;height:17px;background:#000;border-radius:4px"></div>
<div style="left:840px;top:390px;white-space:nowrap;font-size:14px;color:#fff;line-height:17px">19 750,00</div>
<div style="left:0px;top:493px;width:837px;height:1px;background:#e41e1e"></div>
<svg style="position:absolute;left:96px;top:505px;shape-rendering:crispEdges" width="741" height="1" viewBox="0 0 741 1"><line x1="0" y1="0.5" x2="741" y2="0.5" stroke="#e41e1e" stroke-width="1" stroke-dasharray="3,2"/></svg>
<div style="left:1px;top:499px;white-space:nowrap;font-size:14px;color:#e41e1e;line-height:16px">18,12 / 0,09 %</div>
<div style="left:0px;top:551px;width:837px;height:4px;background:#fbe84a"></div>
<div style="left:839px;top:543px;width:65px;height:17px;background:#fbe84a;border-radius:4px"></div>
<div style="left:840px;top:544px;white-space:nowrap;font-size:14px;color:#111;line-height:17px">19 527,68</div>
<div style="left:0px;top:571px;width:837px;height:2px;background:#000"></div>
<div style="left:839px;top:562px;width:65px;height:17px;background:#000;border-radius:4px"></div>
<div style="left:840px;top:563px;white-space:nowrap;font-size:14px;color:#fff;line-height:17px">19 500,00</div>
<svg style="position:absolute;left:0px;top:743px;shape-rendering:crispEdges" width="837" height="2" viewBox="0 0 837 2"><line x1="0" y1="1.0" x2="837" y2="1.0" stroke="#000" stroke-width="2" stroke-dasharray="5,5"/></svg>
<div style="left:839px;top:735px;width:65px;height:17px;background:#000;border-radius:4px"></div>
<div style="left:840px;top:736px;white-space:nowrap;font-size:14px;color:#fff;line-height:17px">19 250,00</div>
<div style="left:0px;top:771px;width:837px;height:3px;background:#f5a012"></div>
<div style="left:839px;top:763px;width:65px;height:17px;background:#f5a012;border-radius:4px"></div>
<div style="left:840px;top:764px;white-space:nowrap;font-size:14px;color:#111;line-height:17px">19 210,29</div>
<div style="left:837px;top:500px;width:85px;height:14px;background:#ff0000"></div>
<div style="left:846px;top:497px;white-space:nowrap;font-size:14px;color:#fff;font-weight:bold;line-height:17px">19 596,38</div>
<div style="left:837px;top:480px;width:85px;height:24px;background:#00b000;border-radius:4px"></div>
<div style="left:840px;top:483px;white-space:nowrap;font-size:15px;color:#fff;font-weight:bold;line-height:17px">19 614,50</div>
<div style="left:0px;top:882px;width:922px;height:3px;background:#bcc4cc"></div>
<div style="left:0px;top:885px;width:922px;height:23px;background:#dcdde0;border-bottom:1px solid #c6c6c6"></div>
<div style="left:60px;top:886px;width:60px;height:21px;background:#eef0f3"></div>
<div style="left:862px;top:886px;width:59px;height:21px;background:#eef0f3"></div>
<div style="left:29px;top:886px;width:1px;height:21px;background:#c7c8cb"></div>
<div style="left:59px;top:886px;width:1px;height:21px;background:#c7c8cb"></div>
<div style="left:89px;top:886px;width:1px;height:21px;background:#c7c8cb"></div>
<div style="left:119px;top:886px;width:1px;height:21px;background:#c7c8cb"></div>
<div style="left:196px;top:886px;width:1px;height:21px;background:#c7c8cb"></div>
<div style="left:295px;top:886px;width:1px;height:21px;background:#c7c8cb"></div>
<div style="left:395px;top:886px;width:1px;height:21px;background:#c7c8cb"></div>
<div style="left:495px;top:886px;width:1px;height:21px;background:#c7c8cb"></div>
<div style="left:595px;top:886px;width:1px;height:21px;background:#c7c8cb"></div>
<div style="left:695px;top:886px;width:1px;height:21px;background:#c7c8cb"></div>
<div style="left:772px;top:886px;width:1px;height:21px;background:#c7c8cb"></div>
<div style="left:802px;top:886px;width:1px;height:21px;background:#c7c8cb"></div>
<div style="left:832px;top:886px;width:1px;height:21px;background:#c7c8cb"></div>
<div style="left:861px;top:886px;width:1px;height:21px;background:#c7c8cb"></div>
<div style="left:891px;top:886px;width:1px;height:21px;background:#c7c8cb"></div>
<svg style="position:absolute;left:8px;top:889px;" width="16" height="16" viewBox="0 0 16 16"><path d="M8.3,2 A5.6,5.6 0 1 1 2.3,5.5" fill="none" stroke="#666" stroke-width="1.5"/><path d="M2,1 L6.5,1.2 L3.2,4.8 Z" fill="#666"/></svg>
<svg style="position:absolute;left:38px;top:889px;" width="16" height="16" viewBox="0 0 16 16"><circle cx="8" cy="8" r="6" fill="none" stroke="#666" stroke-width="1.5"/><line x1="3.8" y1="12.2" x2="12.2" y2="3.8" stroke="#666" stroke-width="1.5"/></svg>
<svg style="position:absolute;left:68px;top:889px;" width="16" height="16" viewBox="0 0 16 16"><path d="M2,14 L3,10 L11,2 L14,5 L6,13 Z" fill="#1f7fe8"/></svg>
<svg style="position:absolute;left:99px;top:889px;" width="14" height="16" viewBox="0 0 14 16"><path d="M1,6 L5,1 L8,6 Z M6,10 L13,10 L9.5,15 Z" fill="#1f7fe8"/></svg>
<div style="left:205px;top:889px;white-space:nowrap;font-size:11px;color:#222;line-height:15px">Favoris</div>
<svg style="position:absolute;left:273px;top:888px;" width="14" height="14" viewBox="0 0 14 14"><path d="M7,1 L8.8,5.2 L13.3,5.5 L9.8,8.4 L11,13 L7,10.5 L3,13 L4.2,8.4 L0.7,5.5 L5.2,5.2 Z" fill="#555"/></svg>
<div style="left:295px;top:889px;white-space:nowrap;font-size:11px;color:#222;width:100px;text-align:center;line-height:15px">Période</div>
<div style="left:395px;top:889px;white-space:nowrap;font-size:11px;color:#222;width:100px;text-align:center;line-height:15px">Outils De Dessin</div>
<div style="left:495px;top:889px;white-space:nowrap;font-size:11px;color:#222;width:100px;text-align:center;line-height:15px">Indicateurs</div>
<div style="left:595px;top:889px;white-space:nowrap;font-size:11px;color:#222;width:100px;text-align:center;line-height:15px">Figures</div>
<svg style="position:absolute;left:779px;top:888px;" width="18" height="18" viewBox="0 0 18 18"><path d="M9,1V9 M5.5,4.5H12.5 M1,14H17 M4,11 L1,14 L4,17 M14,11 L17,14 L14,17" fill="none" stroke="#666" stroke-width="1.5"/></svg>
<svg style="position:absolute;left:811px;top:890px;" width="12" height="12" viewBox="0 0 12 12"><path d="M1,6H11" stroke="#777" stroke-width="1.8"/></svg>
<svg style="position:absolute;left:841px;top:890px;" width="12" height="12" viewBox="0 0 12 12"><path d="M6.0,0V12M0,6.0H12" stroke="#666" stroke-width="1.6"/></svg>
<svg style="position:absolute;left:869px;top:888px;" width="18" height="18" viewBox="0 0 18 18"><path d="M9,1V7.5M9,10.5V17M1,9H7.5M10.5,9H17" stroke="#1f7fe8" stroke-width="1.1"/></svg>
<svg style="position:absolute;left:899px;top:887px;" width="16" height="18" viewBox="0 0 16 18"><path d="M1,9.5H15" stroke="#1f7fe8" stroke-width="1.1"/><path d="M8,2.5V7 M8,12V16.5" stroke="#1f7fe8" stroke-width="1.3"/><path d="M5,5 L8,1.5 L11,5 Z M5,14 L8,17.5 L11,14 Z" fill="#1f7fe8"/></svg>
<div style="left:0px;top:908px;width:922px;height:6px;background:#e6e6e6"></div>
<div style="left:0px;top:914px;width:923px;height:166px;background:#fff;border-right:1px solid #c8c8c8;border-bottom:1px solid #c8c8c8"></div>
<div style="left:0px;top:914px;width:922px;height:31px;background:linear-gradient(#dcdcdc,#cbcbcb);border-bottom:1px solid #b4b4b4"></div>
<div style="left:0px;top:914px;width:31px;height:31px;background:linear-gradient(#dadada,#cdcdcd);border:1px solid #bdbdbd;border-bottom:none"></div>
<svg style="position:absolute;left:9px;top:924px;" width="14" height="13" viewBox="0 0 14 13"><path d="M1,1.2H11M1,5.5H11M1,9.8H11" stroke="#505050" stroke-width="2.2"/></svg>
<div style="left:31px;top:914px;width:102px;height:32px;background:#fff;border-right:1px solid #bdbdbd"></div>
<div style="left:39px;top:923px;white-space:nowrap;font-size:12px;color:#111;line-height:15px">Positions (0)</div>
<svg style="position:absolute;left:114px;top:924px;" width="10" height="10" viewBox="0 0 10 10"><path d="M1,1 L9,9 M9,1 L1,9" stroke="#666" stroke-width="1.1"/></svg>
<div style="left:141px;top:923px;white-space:nowrap;font-size:12px;color:#666;line-height:15px">Carnet des Ordres Exécutés</div>
<div style="left:299px;top:919px;width:1px;height:20px;background:#bdbdbd"></div>
<svg style="position:absolute;left:309px;top:923px;" width="12" height="12" viewBox="0 0 12 12"><path d="M6.0,0V12M0,6.0H12" stroke="#888" stroke-width="1.6"/></svg>
<div style="left:863px;top:917px;width:10px;height:27px;background:#c8c8c8"></div>
<div style="left:863px;top:926px;width:10px;height:1px;background:#555"></div>
<div style="left:863px;top:932px;width:10px;height:1px;background:#555"></div>
<div style="left:863px;top:938px;width:10px;height:1px;background:#555"></div>
<svg style="position:absolute;left:881px;top:924px;" width="12" height="12" viewBox="0 0 12 12"><path d="M2,10 L10,2 M7,1.5H10.5V5 M1.5,7V10.5H5" fill="none" stroke="#555" stroke-width="1"/></svg>
<svg style="position:absolute;left:903px;top:925px;" width="10" height="10" viewBox="0 0 10 10"><path d="M1,1 L9,9 M9,1 L1,9" stroke="#555" stroke-width="1.1"/></svg>
<div style="left:0px;top:946px;width:922px;height:23px;background:#fff;border-bottom:1px solid #e2e2e2"></div>
<div style="left:209px;top:946px;width:1px;height:22px;background:#eeeeee"></div>
<div style="left:285px;top:946px;width:1px;height:22px;background:#eeeeee"></div>
<div style="left:387px;top:946px;width:1px;height:22px;background:#eeeeee"></div>
<div style="left:427px;top:946px;width:1px;height:22px;background:#eeeeee"></div>
<div style="left:499px;top:946px;width:1px;height:22px;background:#eeeeee"></div>
<div style="left:621px;top:946px;width:1px;height:22px;background:#eeeeee"></div>
<div style="left:721px;top:946px;width:1px;height:22px;background:#eeeeee"></div>
<div style="left:871px;top:946px;width:1px;height:22px;background:#eeeeee"></div>
<svg style="position:absolute;left:8px;top:952px;" width="11" height="11" viewBox="0 0 11 11"><path d="M1,1V10" stroke="#555" stroke-width="1.3"/><path d="M4,1.5 L8.5,5.5 L4,9.5" fill="none" stroke="#555" stroke-width="1.3"/></svg>
<div style="left:40px;top:951px;white-space:nowrap;font-size:9.6px;color:#111;font-weight:bold;line-height:13px">POSITION/ORDRE N°</div>
<svg style="position:absolute;left:142px;top:953px;" width="8" height="7" viewBox="0 0 8 7"><path d="M0,7 L4,0 L8,7 Z" fill="#111"/></svg>
<div style="left:397px;top:951px;white-space:nowrap;font-size:9.6px;color:#555;font-weight:bold;line-height:13px">PV&amp;MV TOTALES</div>
<svg style="position:absolute;left:484px;top:951px;" width="6" height="11" viewBox="0 0 6 11"><path d="M0,4.5 L3.5,0 L7,4.5 Z M0,6.5 L3.5,11 L7,6.5 Z" fill="#555"/></svg>
<div style="left:561px;top:951px;white-space:nowrap;font-size:9.6px;color:#555;font-weight:bold;line-height:13px">STOP LOSS</div>
<div style="left:652px;top:951px;white-space:nowrap;font-size:9.6px;color:#555;font-weight:bold;line-height:13px">TAKE PROFIT</div>
<div style="left:758px;top:951px;white-space:nowrap;font-size:9.6px;color:#e08a10;font-weight:bold;line-height:13px">VENTE</div>
<div style="left:832px;top:951px;white-space:nowrap;font-size:9.6px;color:#1ba6bf;font-weight:bold;line-height:13px">ACHAT</div>
<div style="left:100px;top:986px;width:722px;height:54px;background:#fff;border:1px solid #cfcfcf;border-radius:3px"></div>
<div style="left:101px;top:987px;width:43px;height:52px;background:#dedede"></div>
<svg style="position:absolute;left:113px;top:1003px;" width="18" height="18" viewBox="0 0 18 18"><circle cx="9" cy="9" r="9" fill="#555"/><circle cx="9" cy="5" r="1.4" fill="#fff"/><rect x="7.8" y="7.5" width="2.4" height="6.5" fill="#fff"/></svg>
<div style="left:157px;top:1005px;white-space:nowrap;font-size:13px;color:#555;line-height:15px">Aucune Transaction Ou Position.</div>
<div style="left:922px;top:52px;width:270px;height:1028px;background:#e4e4e4"></div>
<div style="left:930px;top:52px;width:255px;height:1028px;background:#f0f0f0"></div>
<svg style="position:absolute;left:1167px;top:59px;" width="12" height="12" viewBox="0 0 12 12"><path d="M1,1 L11,11 M11,1 L1,11" stroke="#555" stroke-width="1.1"/></svg>
<div style="left:932px;top:85px;width:253px;height:31px;background:linear-gradient(#e2e2e2,#c9c9c9);border:1px solid #b4b4b4;border-bottom:none;border-radius:4px 4px 0 0"></div>
<div style="left:933px;top:86px;width:31px;height:30px;background:linear-gradient(#dedede,#c4c4c4);border-radius:3px 0 0 0"></div>
<svg style="position:absolute;left:942px;top:96px;" width="14" height="13" viewBox="0 0 14 13"><path d="M1,1.2H11M1,5.5H11M1,9.8H11" stroke="#505050" stroke-width="2.2"/></svg>
<div style="left:964px;top:86px;width:81px;height:30px;background:#fff"></div>
<div style="left:972px;top:90px;white-space:nowrap;font-size:10px;color:#111;line-height:11px">US NDAQ 100</div>
<div style="left:972px;top:101px;white-space:nowrap;font-size:10px;color:#111;line-height:11px">Sep 2024</div>
<div style="left:1045px;top:86px;width:37px;height:30px;background:linear-gradient(#d8d8d8,#c4c4c4);border-left:1px solid #bbb"></div>
<div style="left:1082px;top:86px;width:62px;height:30px;background:#fff"></div>
<svg style="position:absolute;left:1090px;top:92px;" width="9" height="8" viewBox="0 0 9 8"><path d="M0,8 L4.5,0 L9,8 Z" fill="#1e5a14"/></svg>
<div style="left:1082px;top:89px;white-space:nowrap;font-size:12px;color:#2a6412;width:58px;text-align:right;line-height:13px">0,09 %</div>
<div style="left:1082px;top:103px;white-space:nowrap;font-size:12px;color:#2a6412;width:58px;text-align:right;line-height:13px">18,12</div>
<div style="left:1145px;top:86px;width:12px;height:30px;background:#c4c4c4"></div>
<div style="left:1147px;top:88px;width:10px;height:1px;background:#555"></div>
<div style="left:1147px;top:95px;width:10px;height:1px;background:#555"></div>
<div style="left:1147px;top:102px;width:10px;height:1px;background:#555"></div>
<div style="left:1147px;top:109px;width:10px;height:1px;background:#555"></div>
<svg style="position:absolute;left:1165px;top:97px;" width="10" height="10" viewBox="0 0 10 10"><path d="M1,1 L9,9 M9,1 L1,9" stroke="#555" stroke-width="1.1"/></svg>
<div style="left:932px;top:116px;width:253px;height:77px;background:linear-gradient(#979899,#8a8b8c);border-top:1px solid #727272"></div>
<div style="left:1058px;top:132px;width:1px;height:44px;background:#6f7072"></div>
<div style="left:940px;top:119px;white-space:nowrap;font-size:11px;color:#f6eba6;font-weight:bold;line-height:13px">VENDRE</div>
<div style="left:1100px;top:119px;white-space:nowrap;font-size:11px;color:#b0eff3;font-weight:bold;line-height:13px;width:77px;text-align:right">ACHETER</div>
<div style="left:1038px;top:116px;width:41px;height:16px;background:#757575;border:2px solid #666;border-top:1px solid #666"></div>
<div style="left:1038px;top:118px;white-space:nowrap;font-size:12px;color:#e6e6e6;font-weight:bold;width:41px;text-align:center;line-height:13px">3,00</div>
<svg style="position:absolute;left:1025px;top:121px;" width="9" height="8" viewBox="0 0 9 8"><path d="M0,8 L4.5,0 L9,8 Z" fill="#10f010"/></svg>
<svg style="position:absolute;left:1083px;top:121px;" width="9" height="8" viewBox="0 0 9 8"><path d="M0,8 L4.5,0 L9,8 Z" fill="#10f010"/></svg>
<div style="left:932px;top:138px;white-space:nowrap;font-size:27px;color:#fff;width:126px;text-align:center;line-height:30px">19611,<span style="font-size:19px">50</span></div>
<div style="left:1059px;top:138px;white-space:nowrap;font-size:27px;color:#fff;width:126px;text-align:center;line-height:30px">19614,<span style="font-size:19px">50</span></div>
<div style="left:938px;top:178px;white-space:nowrap;font-size:11px;color:#dcdcdc;font-weight:bold;line-height:13px">B:19 510,00</div>
<div style="left:1099px;top:178px;white-space:nowrap;font-size:11px;color:#dcdcdc;font-weight:bold;line-height:13px;width:80px;text-align:right">H:19 629,00</div>
<div style="left:1018px;top:177px;width:66px;height:16px;background:#dcddde;border-radius:2px 0 0 0"></div>
<div style="left:1018px;top:178px;white-space:nowrap;font-size:13px;color:#222;width:66px;text-align:center;line-height:15px">1</div>
<div style="left:1084px;top:177px;width:15px;height:16px;background:#fff"></div>
<svg style="position:absolute;left:1087px;top:182px;" width="9" height="6" viewBox="0 0 9 6"><path d="M1,1 L4.5,4.5 L8,1" fill="none" stroke="#555" stroke-width="1.3"/></svg>
<div style="left:932px;top:211px;width:253px;height:31px;background:linear-gradient(#e2e2e2,#c9c9c9);border:1px solid #b4b4b4;border-bottom:none;border-radius:4px 4px 0 0"></div>
<div style="left:933px;top:212px;width:31px;height:30px;background:linear-gradient(#dedede,#c4c4c4);border-radius:3px 0 0 0"></div>
<svg style="position:absolute;left:942px;top:222px;" width="14" height="13" viewBox="0 0 14 13"><path d="M1,1.2H11M1,5.5H11M1,9.8H11" stroke="#505050" stroke-width="2.2"/></svg>
<div style="left:964px;top:212px;width:80px;height:30px;background:#fff"></div>
<div style="left:972px;top:216px;white-space:nowrap;font-size:10px;color:#111;line-height:11px">US 30</div>
<div style="left:972px;top:227px;white-space:nowrap;font-size:10px;color:#111;line-height:11px">Sep 2024</div>
<svg style="position:absolute;left:1020px;top:218px;" width="16" height="16" viewBox="0 0 16 16"><circle cx="6" cy="6" r="4.7" fill="none" stroke="#555" stroke-width="1.1"/><line x1="9.5" y1="9.5" x2="14" y2="14" stroke="#555" stroke-width="1.2"/></svg>
<div style="left:1044px;top:212px;width:38px;height:30px;background:linear-gradient(#d8d8d8,#c4c4c4);border-left:1px solid #bbb"></div>
<div style="left:1082px;top:212px;width:62px;height:30px;background:#fff"></div>
<svg style="position:absolute;left:1090px;top:218px;" width="9" height="8" viewBox="0 0 9 8"><path d="M0,0 L4.5,8 L9,0 Z" fill="#b81010"/></svg>
<div style="left:1082px;top:215px;white-space:nowrap;font-size:12px;color:#c01414;width:58px;text-align:right;line-height:13px">0,06 %</div>
<div style="left:1082px;top:229px;white-space:nowrap;font-size:12px;color:#c01414;width:58px;text-align:right;line-height:13px">28,5</div>
<div style="left:1145px;top:212px;width:12px;height:30px;background:#c4c4c4"></div>
<div style="left:1147px;top:214px;width:10px;height:1px;background:#555"></div>
<div style="left:1147px;top:221px;width:10px;height:1px;background:#555"></div>
<div style="left:1147px;top:228px;width:10px;height:1px;background:#555"></div>
<div style="left:1147px;top:235px;width:10px;height:1px;background:#555"></div>
<svg style="position:absolute;left:1165px;top:223px;" width="10" height="10" viewBox="0 0 10 10"><path d="M1,1 L9,9 M9,1 L1,9" stroke="#555" stroke-width="1.1"/></svg>
<div style="left:932px;top:242px;width:253px;height:77px;background:linear-gradient(#979899,#8a8b8c);border-top:1px solid #727272"></div>
<div style="left:1058px;top:258px;width:1px;height:44px;background:#6f7072"></div>
<div style="left:940px;top:245px;white-space:nowrap;font-size:11px;color:#f6eba6;font-weight:bold;line-height:13px">VENDRE</div>
<div style="left:1100px;top:245px;white-space:nowrap;font-size:11px;color:#b0eff3;font-weight:bold;line-height:13px;width:77px;text-align:right">ACHETER</div>
<div style="left:1042px;top:242px;width:33px;height:16px;background:#757575;border:2px solid #666;border-top:1px solid #666"></div>
<div style="left:1042px;top:244px;white-space:nowrap;font-size:12px;color:#e6e6e6;font-weight:bold;width:33px;text-align:center;line-height:13px">4,0</div>
<div style="left:932px;top:264px;white-space:nowrap;font-size:27px;color:#fff;width:126px;text-align:center;line-height:30px">41610,<span style="font-size:19px">0</span></div>
<div style="left:1059px;top:264px;white-space:nowrap;font-size:27px;color:#fff;width:126px;text-align:center;line-height:30px">41614,<span style="font-size:19px">0</span></div>
<div style="left:938px;top:304px;white-space:nowrap;font-size:11px;color:#dcdcdc;font-weight:bold;line-height:13px">B:41 507,0</div>
<div style="left:1099px;top:304px;white-space:nowrap;font-size:11px;color:#dcdcdc;font-weight:bold;line-height:13px;width:80px;text-align:right">H:41 655,0</div>
<div style="left:1018px;top:303px;width:66px;height:16px;background:#dcddde;border-radius:2px 0 0 0"></div>
<div style="left:1018px;top:304px;white-space:nowrap;font-size:13px;color:#222;width:66px;text-align:center;line-height:15px">-</div>
<div style="left:1084px;top:303px;width:15px;height:16px;background:#fff"></div>
<svg style="position:absolute;left:1087px;top:308px;" width="9" height="6" viewBox="0 0 9 6"><path d="M1,1 L4.5,4.5 L8,1" fill="none" stroke="#555" stroke-width="1.3"/></svg>
<div style="left:932px;top:323px;width:253px;height:31px;background:linear-gradient(#e2e2e2,#c9c9c9);border:1px solid #b4b4b4;border-bottom:none;border-radius:4px 4px 0 0"></div>
<div style="left:933px;top:324px;width:31px;height:30px;background:linear-gradient(#dedede,#c4c4c4);border-radius:3px 0 0 0"></div>
<svg style="position:absolute;left:942px;top:334px;" width="14" height="13" viewBox="0 0 14 13"><path d="M1,1.2H11M1,5.5H11M1,9.8H11" stroke="#505050" stroke-width="2.2"/></svg>
<div style="left:964px;top:324px;width:93px;height:30px;background:#fff"></div>
<div style="left:972px;top:328px;white-space:nowrap;font-size:10px;color:#111;line-height:11px">US SPX 500</div>
<div style="left:972px;top:339px;white-space:nowrap;font-size:10px;color:#111;line-height:11px">Sep 2024</div>
<svg style="position:absolute;left:1033px;top:330px;" width="16" height="16" viewBox="0 0 16 16"><circle cx="6" cy="6" r="4.7" fill="none" stroke="#555" stroke-width="1.1"/><line x1="9.5" y1="9.5" x2="14" y2="14" stroke="#555" stroke-width="1.2"/></svg>
<div style="left:1057px;top:324px;width:25px;height:30px;background:linear-gradient(#d8d8d8,#c4c4c4);border-left:1px solid #bbb"></div>
<div style="left:1082px;top:324px;width:62px;height:30px;background:#fff"></div>
<svg style="position:absolute;left:1107px;top:330px;" width="9" height="8" viewBox="0 0 9 8"><path d="M0,8 L4.5,0 L9,8 Z" fill="#1e5a14"/></svg>
<div style="left:1082px;top:327px;white-space:nowrap;font-size:12px;color:#2a6412;width:58px;text-align:right;line-height:13px">0 %</div>
<div style="left:1082px;top:341px;white-space:nowrap;font-size:12px;color:#2a6412;width:58px;text-align:right;line-height:13px">0,25</div>
<div style="left:1145px;top:324px;width:12px;height:30px;background:#c4c4c4"></div>
<div style="left:1147px;top:326px;width:10px;height:1px;background:#555"></div>
<div style="left:1147px;top:333px;width:10px;height:1px;background:#555"></div>
<div style="left:1147px;top:340px;width:10px;height:1px;background:#555"></div>
<div style="left:1147px;top:347px;width:10px;height:1px;background:#555"></div>
<svg style="position:absolute;left:1165px;top:335px;" width="10" height="10" viewBox="0 0 10 10"><path d="M1,1 L9,9 M9,1 L1,9" stroke="#555" stroke-width="1.1"/></svg>
<div style="left:932px;top:354px;width:253px;height:77px;background:linear-gradient(#979899,#8a8b8c);border-top:1px solid #727272"></div>
<div style="left:1058px;top:370px;width:1px;height:44px;background:#6f7072"></div>
<div style="left:940px;top:357px;white-space:nowrap;font-size:11px;color:#f6eba6;font-weight:bold;line-height:13px">VENDRE</div>
<div style="left:1100px;top:357px;white-space:nowrap;font-size:11px;color:#b0eff3;font-weight:bold;line-height:13px;width:77px;text-align:right">ACHETER</div>
<div style="left:1042px;top:354px;width:33px;height:16px;background:#757575;border:2px solid #666;border-top:1px solid #666"></div>
<div style="left:1042px;top:356px;white-space:nowrap;font-size:12px;color:#e6e6e6;font-weight:bold;width:33px;text-align:center;line-height:13px">7,0</div>
<div style="left:932px;top:376px;white-space:nowrap;font-size:27px;color:#fff;width:126px;text-align:center;line-height:30px">5656,5<span style="font-size:19px">3</span></div>
<div style="left:1059px;top:376px;white-space:nowrap;font-size:27px;color:#fff;width:126px;text-align:center;line-height:30px">5657,2<span style="font-size:19px">3</span></div>
<div style="left:938px;top:416px;white-space:nowrap;font-size:11px;color:#dcdcdc;font-weight:bold;line-height:13px">B:5 637,78</div>
<div style="left:1099px;top:416px;white-space:nowrap;font-size:11px;color:#dcdcdc;font-weight:bold;line-height:13px;width:80px;text-align:right">H:5 660,73</div>
<div style="left:1018px;top:415px;width:66px;height:16px;background:#dcddde;border-radius:2px 0 0 0"></div>
<div style="left:1018px;top:416px;white-space:nowrap;font-size:13px;color:#222;width:66px;text-align:center;line-height:15px">-</div>
<div style="left:1084px;top:415px;width:15px;height:16px;background:#fff"></div>
<svg style="position:absolute;left:1087px;top:420px;" width="9" height="6" viewBox="0 0 9 6"><path d="M1,1 L4.5,4.5 L8,1" fill="none" stroke="#555" stroke-width="1.3"/></svg>
<svg style="position:absolute;left:1036px;top:559px;" width="18" height="18" viewBox="0 0 18 18"><path d="M2,3.5 L8,9.5 L14,3.5 M8,9.5V16.5" fill="none" stroke="#6a6a6a" stroke-width="1.3"/><path d="M1.5,7.5V3H6 M10,3H14.5V7.5" fill="none" stroke="#6a6a6a" stroke-width="1.5"/></svg>
<svg style="position:absolute;left:1063px;top:558px;" width="18" height="18" viewBox="0 0 18 18"><path d="M9,1V17M1,9H17" stroke="#7a7a7a" stroke-width="1.8"/></svg>
<div style="left:932px;top:575px;width:253px;height:31px;background:linear-gradient(#e2e2e2,#c9c9c9);border:1px solid #b4b4b4;border-bottom:none;border-radius:4px 4px 0 0"></div>
<div style="left:933px;top:576px;width:31px;height:30px;background:linear-gradient(#dedede,#c4c4c4);border-radius:3px 0 0 0"></div>
<svg style="position:absolute;left:942px;top:586px;" width="14" height="13" viewBox="0 0 14 13"><path d="M1,1.2H11M1,5.5H11M1,9.8H11" stroke="#505050" stroke-width="2.2"/></svg>
<div style="left:964px;top:576px;width:77px;height:30px;background:#fff"></div>
<div style="left:972px;top:580px;white-space:nowrap;font-size:10px;color:#111;line-height:11px">Allemagne 40</div>
<div style="left:972px;top:591px;white-space:nowrap;font-size:10px;color:#111;line-height:11px">Sep 2024</div>
<div style="left:1041px;top:576px;width:41px;height:30px;background:linear-gradient(#d8d8d8,#c4c4c4);border-left:1px solid #bbb"></div>
<div style="left:1082px;top:576px;width:62px;height:30px;background:#fff"></div>
<svg style="position:absolute;left:1090px;top:582px;" width="9" height="8" viewBox="0 0 9 8"><path d="M0,0 L4.5,8 L9,0 Z" fill="#b81010"/></svg>
<div style="left:1082px;top:579px;white-space:nowrap;font-size:12px;color:#c01414;width:58px;text-align:right;line-height:13px">0,28 %</div>
<div style="left:1082px;top:593px;white-space:nowrap;font-size:12px;color:#c01414;width:58px;text-align:right;line-height:13px">53,55</div>
<div style="left:1145px;top:576px;width:12px;height:30px;background:#c4c4c4"></div>
<div style="left:1147px;top:578px;width:10px;height:1px;background:#555"></div>
<div style="left:1147px;top:585px;width:10px;height:1px;background:#555"></div>
<div style="left:1147px;top:592px;width:10px;height:1px;background:#555"></div>
<div style="left:1147px;top:599px;width:10px;height:1px;background:#555"></div>
<svg style="position:absolute;left:1165px;top:587px;" width="10" height="10" viewBox="0 0 10 10"><path d="M1,1 L9,9 M9,1 L1,9" stroke="#555" stroke-width="1.1"/></svg>
<div style="left:932px;top:606px;width:253px;height:77px;background:linear-gradient(#979899,#8a8b8c);border-top:1px solid #727272"></div>
<div style="left:1058px;top:622px;width:1px;height:44px;background:#6f7072"></div>
<div style="left:940px;top:609px;white-space:nowrap;font-size:11px;color:#f6eba6;font-weight:bold;line-height:13px">VENDRE</div>
<div style="left:1100px;top:609px;white-space:nowrap;font-size:11px;color:#b0eff3;font-weight:bold;line-height:13px;width:77px;text-align:right">ACHETER</div>
<div style="left:1042px;top:606px;width:33px;height:16px;background:#757575;border:2px solid #666;border-top:1px solid #666"></div>
<div style="left:1042px;top:608px;white-space:nowrap;font-size:12px;color:#e6e6e6;font-weight:bold;width:33px;text-align:center;line-height:13px">2,0</div>
<div style="left:932px;top:628px;white-space:nowrap;font-size:27px;color:#fff;width:126px;text-align:center;line-height:30px">18935,<span style="font-size:19px">5</span></div>
<div style="left:1059px;top:628px;white-space:nowrap;font-size:27px;color:#fff;width:126px;text-align:center;line-height:30px">18937,<span style="font-size:19px">5</span></div>
<div style="left:938px;top:668px;white-space:nowrap;font-size:11px;color:#dcdcdc;font-weight:bold;line-height:13px">B:18 811,0</div>
<div style="left:1099px;top:668px;white-space:nowrap;font-size:11px;color:#dcdcdc;font-weight:bold;line-height:13px;width:80px;text-align:right">H:19 002,8</div>
<div style="left:1018px;top:667px;width:66px;height:16px;background:#dcddde;border-radius:2px 0 0 0"></div>
<div style="left:1018px;top:668px;white-space:nowrap;font-size:13px;color:#222;width:66px;text-align:center;line-height:15px">1</div>
<div style="left:1084px;top:667px;width:15px;height:16px;background:#fff"></div>
<svg style="position:absolute;left:1087px;top:672px;" width="9" height="6" viewBox="0 0 9 6"><path d="M1,1 L4.5,4.5 L8,1" fill="none" stroke="#555" stroke-width="1.3"/></svg>
<div style="left:932px;top:770px;width:253px;height:31px;background:linear-gradient(#e2e2e2,#c9c9c9);border:1px solid #b4b4b4;border-bottom:none;border-radius:4px 4px 0 0"></div>
<div style="left:933px;top:771px;width:31px;height:30px;background:linear-gradient(#dedede,#c4c4c4);border-radius:3px 0 0 0"></div>
<svg style="position:absolute;left:942px;top:781px;" width="14" height="13" viewBox="0 0 14 13"><path d="M1,1.2H11M1,5.5H11M1,9.8H11" stroke="#505050" stroke-width="2.2"/></svg>
<div style="left:964px;top:771px;width:77px;height:30px;background:#fff"></div>
<div style="left:972px;top:775px;white-space:nowrap;font-size:10px;color:#111;line-height:11px">Euro 50</div>
<div style="left:972px;top:786px;white-space:nowrap;font-size:10px;color:#111;line-height:11px">Sep 2024</div>
<div style="left:1041px;top:771px;width:41px;height:30px;background:linear-gradient(#d8d8d8,#c4c4c4);border-left:1px solid #bbb"></div>
<div style="left:1082px;top:771px;width:62px;height:30px;background:#fff"></div>
<svg style="position:absolute;left:1091px;top:777px;" width="9" height="8" viewBox="0 0 9 8"><path d="M0,0 L4.5,8 L9,0 Z" fill="#b81010"/></svg>
<div style="left:1082px;top:774px;white-space:nowrap;font-size:12px;color:#c01414;width:58px;text-align:right;line-height:13px">0,11 %</div>
<div style="left:1082px;top:788px;white-space:nowrap;font-size:12px;color:#c01414;width:58px;text-align:right;line-height:13px">5,5</div>
<div style="left:1145px;top:771px;width:12px;height:30px;background:#c4c4c4"></div>
<div style="left:1147px;top:773px;width:10px;height:1px;background:#555"></div>
<div style="left:1147px;top:780px;width:10px;height:1px;background:#555"></div>
<div style="left:1147px;top:787px;width:10px;height:1px;background:#555"></div>
<div style="left:1147px;top:794px;width:10px;height:1px;background:#555"></div>
<svg style="position:absolute;left:1165px;top:782px;" width="10" height="10" viewBox="0 0 10 10"><path d="M1,1 L9,9 M9,1 L1,9" stroke="#555" stroke-width="1.1"/></svg>
<div style="left:932px;top:801px;width:253px;height:77px;background:linear-gradient(#979899,#8a8b8c);border-top:1px solid #727272"></div>
<div style="left:1058px;top:817px;width:1px;height:44px;background:#6f7072"></div>
<div style="left:940px;top:804px;white-space:nowrap;font-size:11px;color:#f6eba6;font-weight:bold;line-height:13px">VENDRE</div>
<div style="left:1100px;top:804px;white-space:nowrap;font-size:11px;color:#b0eff3;font-weight:bold;line-height:13px;width:77px;text-align:right">ACHETER</div>
<div style="left:1042px;top:801px;width:33px;height:16px;background:#757575;border:2px solid #666;border-top:1px solid #666"></div>
<div style="left:1042px;top:803px;white-space:nowrap;font-size:12px;color:#e6e6e6;font-weight:bold;width:33px;text-align:center;line-height:13px">2,0</div>
<div style="left:932px;top:823px;white-space:nowrap;font-size:27px;color:#fff;width:126px;text-align:center;line-height:30px">4972,<span style="font-size:19px">5</span></div>
<div style="left:1059px;top:823px;white-space:nowrap;font-size:27px;color:#fff;width:126px;text-align:center;line-height:30px">4974,<span style="font-size:19px">5</span></div>
<div style="left:938px;top:863px;white-space:nowrap;font-size:11px;color:#dcdcdc;font-weight:bold;line-height:13px">B:4 932,5</div>
<div style="left:1099px;top:863px;white-space:nowrap;font-size:11px;color:#dcdcdc;font-weight:bold;line-height:13px;width:80px;text-align:right">H:4 982,6</div>
<div style="left:1018px;top:862px;width:66px;height:16px;background:#dcddde;border-radius:2px 0 0 0"></div>
<div style="left:1018px;top:863px;white-space:nowrap;font-size:13px;color:#222;width:66px;text-align:center;line-height:15px">-</div>
<div style="left:1084px;top:862px;width:15px;height:16px;background:#fff"></div>
<svg style="position:absolute;left:1087px;top:867px;" width="9" height="6" viewBox="0 0 9 6"><path d="M1,1 L4.5,4.5 L8,1" fill="none" stroke="#555" stroke-width="1.3"/></svg>
<div style="left:932px;top:687px;width:253px;height:31px;background:linear-gradient(#e2e2e2,#c9c9c9);border:1px solid #b4b4b4;border-bottom:none;border-radius:4px 4px 0 0"></div>
<div style="left:933px;top:688px;width:31px;height:30px;background:linear-gradient(#dedede,#c4c4c4);border-radius:3px 0 0 0"></div>
<svg style="position:absolute;left:942px;top:698px;" width="14" height="13" viewBox="0 0 14 13"><path d="M1,1.2H11M1,5.5H11M1,9.8H11" stroke="#505050" stroke-width="2.2"/></svg>
<div style="left:964px;top:688px;width:82px;height:30px;background:#fff"></div>
<div style="left:972px;top:692px;white-space:nowrap;font-size:10px;color:#111;line-height:11px">France 40</div>
<div style="left:972px;top:703px;white-space:nowrap;font-size:10px;color:#111;line-height:11px">Sep 2024</div>
<svg style="position:absolute;left:1022px;top:694px;" width="16" height="16" viewBox="0 0 16 16"><circle cx="6" cy="6" r="4.7" fill="none" stroke="#555" stroke-width="1.1"/><line x1="9.5" y1="9.5" x2="14" y2="14" stroke="#555" stroke-width="1.2"/></svg>
<div style="left:1046px;top:688px;width:36px;height:30px;background:linear-gradient(#d8d8d8,#c4c4c4);border-left:1px solid #bbb"></div>
<div style="left:1082px;top:688px;width:62px;height:30px;background:#fff"></div>
<svg style="position:absolute;left:1090px;top:694px;" width="9" height="8" viewBox="0 0 9 8"><path d="M0,0 L4.5,8 L9,0 Z" fill="#b81010"/></svg>
<div style="left:1082px;top:691px;white-space:nowrap;font-size:12px;color:#c01414;width:58px;text-align:right;line-height:13px">0,22 %</div>
<div style="left:1082px;top:705px;white-space:nowrap;font-size:12px;color:#c01414;width:58px;text-align:right;line-height:13px">17,5</div>
<div style="left:1145px;top:688px;width:12px;height:30px;background:#c4c4c4"></div>
<div style="left:1147px;top:690px;width:10px;height:1px;background:#555"></div>
<div style="left:1147px;top:697px;width:10px;height:1px;background:#555"></div>
<div style="left:1147px;top:704px;width:10px;height:1px;background:#555"></div>
<div style="left:1147px;top:711px;width:10px;height:1px;background:#555"></div>
<svg style="position:absolute;left:1165px;top:699px;" width="10" height="10" viewBox="0 0 10 10"><path d="M1,1 L9,9 M9,1 L1,9" stroke="#555" stroke-width="1.1"/></svg>
<div style="left:932px;top:718px;width:253px;height:77px;background:linear-gradient(#979899,#8a8b8c);border-top:1px solid #727272"></div>
<div style="left:1058px;top:734px;width:1px;height:44px;background:#6f7072"></div>
<div style="left:940px;top:721px;white-space:nowrap;font-size:11px;color:#f6eba6;font-weight:bold;line-height:13px">VENDRE</div>
<div style="left:1100px;top:721px;white-space:nowrap;font-size:11px;color:#b0eff3;font-weight:bold;line-height:13px;width:77px;text-align:right">ACHETER</div>
<div style="left:1042px;top:718px;width:33px;height:16px;background:#757575;border:2px solid #666;border-top:1px solid #666"></div>
<div style="left:1042px;top:720px;white-space:nowrap;font-size:12px;color:#e6e6e6;font-weight:bold;width:33px;text-align:center;line-height:13px">2,0</div>
<div style="left:932px;top:740px;white-space:nowrap;font-size:27px;color:#fff;width:126px;text-align:center;line-height:30px">7643,<span style="font-size:19px">8</span></div>
<div style="left:1059px;top:740px;white-space:nowrap;font-size:27px;color:#fff;width:126px;text-align:center;line-height:30px">7645,<span style="font-size:19px">8</span></div>
<div style="left:938px;top:780px;white-space:nowrap;font-size:11px;color:#dcdcdc;font-weight:bold;line-height:13px">B:7 587,5</div>
<div style="left:1099px;top:780px;white-space:nowrap;font-size:11px;color:#dcdcdc;font-weight:bold;line-height:13px;width:80px;text-align:right">H:7 664,8</div>
<div style="left:1018px;top:779px;width:66px;height:16px;background:#dcddde;border-radius:2px 0 0 0"></div>
<div style="left:1018px;top:780px;white-space:nowrap;font-size:13px;color:#222;width:66px;text-align:center;line-height:15px">-</div>
<div style="left:1084px;top:779px;width:15px;height:16px;background:#fff"></div>
<svg style="position:absolute;left:1087px;top:784px;" width="9" height="6" viewBox="0 0 9 6"><path d="M1,1 L4.5,4.5 L8,1" fill="none" stroke="#555" stroke-width="1.3"/></svg>
<div style="left:1192px;top:52px;width:728px;height:1028px;background:#e6e6e6"></div>
<div style="left:1192px;top:53px;width:728px;height:31px;background:linear-gradient(#dcdcdc,#cbcbcb);border-bottom:1px solid #b4b4b4"></div>
<div style="left:1193px;top:53px;width:31px;height:31px;background:linear-gradient(#dadada,#cdcdcd);border:1px solid #bdbdbd;border-bottom:none"></div>
<svg style="position:absolute;left:1202px;top:63px;" width="14" height="13" viewBox="0 0 14 13"><path d="M1,1.2H11M1,5.5H11M1,9.8H11" stroke="#505050" stroke-width="2.2"/></svg>
<div style="left:1224px;top:53px;width:163px;height:31px;background:#fff;border-right:1px solid #bdbdbd"></div>
<div style="left:1232px;top:61px;white-space:nowrap;font-size:12px;color:#111;line-height:15px">AMERICA EUROPE</div>
<svg style="position:absolute;left:1348px;top:65px;" width="11" height="7" viewBox="0 0 11 7"><path d="M1,1 L5.5,5.5 L10,1" fill="none" stroke="#666" stroke-width="1.1"/></svg>
<svg style="position:absolute;left:1366px;top:61px;" width="16" height="16" viewBox="0 0 16 16"><circle cx="6" cy="6" r="5" fill="none" stroke="#555" stroke-width="1.1"/><path d="M6,3.5V8.5M3.5,6H8.5" stroke="#555" stroke-width="1"/><line x1="9.6" y1="9.6" x2="14" y2="14" stroke="#555" stroke-width="1.3"/></svg>
<svg style="position:absolute;left:1398px;top:63px;" width="11" height="11" viewBox="0 0 11 11"><path d="M5.5,0V11M0,5.5H11" stroke="#8a8a8a" stroke-width="1.6"/></svg>
<div style="left:1859px;top:55px;width:10px;height:28px;background:#c8c8c8"></div>
<div style="left:1859px;top:57px;width:10px;height:4px;background:#00d4f0"></div>
<div style="left:1859px;top:64px;width:10px;height:1px;background:#555"></div>
<div style="left:1859px;top:70px;width:10px;height:1px;background:#555"></div>
<div style="left:1859px;top:76px;width:10px;height:1px;background:#555"></div>
<svg style="position:absolute;left:1876px;top:63px;" width="12" height="12" viewBox="0 0 12 12"><path d="M2,10 L10,2 M7,1.5H10.5V5 M1.5,7V10.5H5" fill="none" stroke="#555" stroke-width="1"/></svg>
<svg style="position:absolute;left:1899px;top:64px;" width="10" height="10" viewBox="0 0 10 10"><path d="M1,1 L9,9 M9,1 L1,9" stroke="#555" stroke-width="1.1"/></svg>
<div style="left:1192px;top:84px;width:728px;height:293px;background:#f8f8f8;border-left:1px solid #b5b5b5;border-right:1px solid #c8c8c8;border-bottom:1px solid #c8c8c8"></div>
<div style="left:1193px;top:84px;width:726px;height:23px;background:#fff"></div>
<div style="left:1399px;top:84px;width:1px;height:223px;background:#ececec"></div>
<div style="left:1515px;top:84px;width:1px;height:223px;background:#ececec"></div>
<div style="left:1604px;top:84px;width:1px;height:223px;background:#ececec"></div>
<div style="left:1704px;top:84px;width:1px;height:223px;background:#ececec"></div>
<div style="left:1918px;top:84px;width:1px;height:223px;background:#ececec"></div>
<div style="left:1199px;top:90px;white-space:nowrap;font-size:9.6px;color:#666;font-weight:bold;line-height:12px">PRODUIT</div>
<svg style="position:absolute;left:1249px;top:90px;" width="6" height="11" viewBox="0 0 6 11"><path d="M0.5,4.5 L3,1 L5.5,4.5 Z M0.5,6.5 L3,10 L5.5,6.5 Z" fill="#666"/></svg>
<div style="left:1412px;top:90px;white-space:nowrap;font-size:9.6px;color:#666;font-weight:bold;line-height:12px">PERFORMANCE</div>
<svg style="position:absolute;left:1494px;top:90px;" width="6" height="11" viewBox="0 0 6 11"><path d="M0.5,4.5 L3,1 L5.5,4.5 Z M0.5,6.5 L3,10 L5.5,6.5 Z" fill="#666"/></svg>
<div style="left:1534px;top:90px;white-space:nowrap;font-size:9.6px;color:#666;font-weight:bold;line-height:12px">PLUS BAS</div>
<svg style="position:absolute;left:1590px;top:90px;" width="6" height="11" viewBox="0 0 6 11"><path d="M0.5,4.5 L3,1 L5.5,4.5 Z M0.5,6.5 L3,10 L5.5,6.5 Z" fill="#666"/></svg>
<div style="left:1627px;top:90px;white-space:nowrap;font-size:9.6px;color:#666;font-weight:bold;line-height:12px">PLUS HAUT</div>
<svg style="position:absolute;left:1690px;top:90px;" width="6" height="11" viewBox="0 0 6 11"><path d="M0.5,4.5 L3,1 L5.5,4.5 Z M0.5,6.5 L3,10 L5.5,6.5 Z" fill="#666"/></svg>
<div style="left:1773px;top:90px;white-space:nowrap;font-size:9.6px;color:#e08a10;font-weight:bold;line-height:12px">VENTE</div>
<div style="left:1878px;top:90px;white-space:nowrap;font-size:9.6px;color:#1ba6bf;font-weight:bold;line-height:12px">ACHAT</div>
<div style="left:1193px;top:107px;width:726px;height:20px;background:#fff"></div>
<svg style="position:absolute;left:1201px;top:109px;" width="16" height="16" viewBox="0 0 16 16"><circle cx="8" cy="8" r="7" fill="none" stroke="#7a8080" stroke-width="1.1"/><path d="M8,4V5.6 M8,7.2V8.8 M8,10.4V12" stroke="#444" stroke-width="1.7"/></svg>
<div style="left:1222px;top:109px;white-space:nowrap;font-size:12px;color:#000;font-weight:bold;line-height:16px">US SPX 500 - Sep 2024</div>
<svg style="position:absolute;left:1409px;top:113px;" width="8" height="8" viewBox="0 0 8 8"><path d="M0,8 L4,0 L8,8 Z" fill="#2f8a12"/></svg>
<div style="left:1422px;top:110px;white-space:nowrap;font-size:12px;color:#3b8c12;line-height:15px">0 %</div>
<div style="left:1429px;top:110px;white-space:nowrap;font-size:12px;color:#3b8c12;line-height:15px;width:80px;text-align:right">0,25</div>
<div style="left:1508px;top:109px;white-space:nowrap;font-size:12px;color:#111;line-height:15px;width:90px;text-align:right">5 637,78</div>
<div style="left:1608px;top:109px;white-space:nowrap;font-size:12px;color:#111;line-height:15px;width:90px;text-align:right">5 660,73</div>
<div style="left:1708px;top:110px;white-space:nowrap;font-size:12px;color:#4a3514;line-height:15px;width:90px;text-align:right">5 656,53</div>
<div style="left:1815px;top:110px;white-space:nowrap;font-size:12px;color:#1d4c5c;line-height:15px;width:90px;text-align:right">5 657,23</div>
<div style="left:1193px;top:127px;width:726px;height:20px;background:#f3f3f3"></div>
<svg style="position:absolute;left:1201px;top:129px;" width="16" height="16" viewBox="0 0 16 16"><circle cx="8" cy="8" r="7" fill="none" stroke="#7a8080" stroke-width="1.1"/><path d="M8,4V5.6 M8,7.2V8.8 M8,10.4V12" stroke="#444" stroke-width="1.7"/></svg>
<div style="left:1222px;top:129px;white-space:nowrap;font-size:12px;color:#000;font-weight:bold;line-height:16px">US NDAQ 100 - Sep 2024</div>
<svg style="position:absolute;left:1409px;top:133px;" width="8" height="8" viewBox="0 0 8 8"><path d="M0,8 L4,0 L8,8 Z" fill="#2f8a12"/></svg>
<div style="left:1422px;top:130px;white-space:nowrap;font-size:12px;color:#3b8c12;line-height:15px">0,09 %</div>
<div style="left:1429px;top:130px;white-space:nowrap;font-size:12px;color:#3b8c12;line-height:15px;width:80px;text-align:right">18,12</div>
<div style="left:1508px;top:129px;white-space:nowrap;font-size:12px;color:#111;line-height:15px;width:90px;text-align:right">19 510,00</div>
<div style="left:1608px;top:129px;white-space:nowrap;font-size:12px;color:#111;line-height:15px;width:90px;text-align:right">19 629,00</div>
<div style="left:1708px;top:130px;white-space:nowrap;font-size:12px;color:#4a3514;line-height:15px;width:90px;text-align:right">19 611,50</div>
<div style="left:1815px;top:130px;white-space:nowrap;font-size:12px;color:#1d4c5c;line-height:15px;width:90px;text-align:right">19 614,50</div>
<svg style="position:absolute;left:1802px;top:134px;" width="7" height="7" viewBox="0 0 7 7"><path d="M0,7 L3.5,0 L7,7 Z" fill="#2f8a12"/></svg>
<div style="left:1193px;top:147px;width:726px;height:20px;background:#fff"></div>
<svg style="position:absolute;left:1201px;top:149px;" width="16" height="16" viewBox="0 0 16 16"><circle cx="8" cy="8" r="7" fill="none" stroke="#7a8080" stroke-width="1.1"/><path d="M8,4V5.6 M8,7.2V8.8 M8,10.4V12" stroke="#444" stroke-width="1.7"/></svg>
<div style="left:1222px;top:149px;white-space:nowrap;font-size:12px;color:#000;font-weight:bold;line-height:16px">US 30 - Sep 2024</div>
<svg style="position:absolute;left:1409px;top:153px;" width="8" height="8" viewBox="0 0 8 8"><path d="M0,0 L4,8 L8,0 Z" fill="#e8141a"/></svg>
<div style="left:1422px;top:150px;white-space:nowrap;font-size:12px;color:#c3161c;line-height:15px">0,06 %</div>
<div style="left:1429px;top:150px;white-space:nowrap;font-size:12px;color:#c3161c;line-height:15px;width:80px;text-align:right">28,5</div>
<div style="left:1508px;top:149px;white-space:nowrap;font-size:12px;color:#111;line-height:15px;width:90px;text-align:right">41 507,0</div>
<div style="left:1608px;top:149px;white-space:nowrap;font-size:12px;color:#111;line-height:15px;width:90px;text-align:right">41 655,0</div>
<div style="left:1708px;top:150px;white-space:nowrap;font-size:12px;color:#4a3514;line-height:15px;width:90px;text-align:right">41 610,0</div>
<div style="left:1815px;top:150px;white-space:nowrap;font-size:12px;color:#1d4c5c;line-height:15px;width:90px;text-align:right">41 614,0</div>
<div style="left:1193px;top:167px;width:726px;height:20px;background:#f3f3f3"></div>
<svg style="position:absolute;left:1201px;top:169px;" width="16" height="16" viewBox="0 0 16 16"><circle cx="8" cy="8" r="7" fill="none" stroke="#7a8080" stroke-width="1.1"/><path d="M8,4V5.6 M8,7.2V8.8 M8,10.4V12" stroke="#444" stroke-width="1.7"/></svg>
<div style="left:1222px;top:169px;white-space:nowrap;font-size:12px;color:#000;font-weight:bold;line-height:16px">US SPX Midcap 400 - Sep ...</div>
<svg style="position:absolute;left:1409px;top:173px;" width="8" height="8" viewBox="0 0 8 8"><path d="M0,0 L4,8 L8,0 Z" fill="#e8141a"/></svg>
<div style="left:1422px;top:170px;white-space:nowrap;font-size:12px;color:#c3161c;line-height:15px">0,16 %</div>
<div style="left:1429px;top:170px;white-space:nowrap;font-size:12px;color:#c3161c;line-height:15px;width:80px;text-align:right">5,2</div>
<div style="left:1508px;top:169px;white-space:nowrap;font-size:12px;color:#111;line-height:15px;width:90px;text-align:right">3 043,15</div>
<div style="left:1608px;top:169px;white-space:nowrap;font-size:12px;color:#111;line-height:15px;width:90px;text-align:right">3 103,80</div>
<div style="left:1708px;top:170px;white-space:nowrap;font-size:12px;color:#4a3514;line-height:15px;width:90px;text-align:right">3 086,20</div>
<div style="left:1815px;top:170px;white-space:nowrap;font-size:12px;color:#1d4c5c;line-height:15px;width:90px;text-align:right">3 088,70</div>
<div style="left:1193px;top:187px;width:726px;height:20px;background:#fff"></div>
<svg style="position:absolute;left:1201px;top:189px;" width="16" height="16" viewBox="0 0 16 16"><circle cx="8" cy="8" r="7" fill="none" stroke="#7a8080" stroke-width="1.1"/><path d="M8,4V5.6 M8,7.2V8.8 M8,10.4V12" stroke="#444" stroke-width="1.7"/></svg>
<div style="left:1222px;top:189px;white-space:nowrap;font-size:12px;color:#000;font-weight:bold;line-height:16px">Europe 600 - Sep 2024</div>
<svg style="position:absolute;left:1409px;top:193px;" width="8" height="8" viewBox="0 0 8 8"><path d="M0,0 L4,8 L8,0 Z" fill="#e8141a"/></svg>
<div style="left:1422px;top:190px;white-space:nowrap;font-size:12px;color:#c3161c;line-height:15px">0,39 %</div>
<div style="left:1429px;top:190px;white-space:nowrap;font-size:12px;color:#c3161c;line-height:15px;width:80px;text-align:right">2,1</div>
<div style="left:1508px;top:189px;white-space:nowrap;font-size:12px;color:#111;line-height:15px;width:90px;text-align:right">522,60</div>
<div style="left:1608px;top:189px;white-space:nowrap;font-size:12px;color:#111;line-height:15px;width:90px;text-align:right">527,40</div>
<div style="left:1708px;top:190px;white-space:nowrap;font-size:12px;color:#4a3514;line-height:15px;width:90px;text-align:right">524,90</div>
<div style="left:1815px;top:190px;white-space:nowrap;font-size:12px;color:#1d4c5c;line-height:15px;width:90px;text-align:right">525,20</div>
<div style="left:1193px;top:207px;width:726px;height:20px;background:#f3f3f3"></div>
<svg style="position:absolute;left:1201px;top:209px;" width="16" height="16" viewBox="0 0 16 16"><circle cx="8" cy="8" r="7" fill="none" stroke="#7a8080" stroke-width="1.1"/><path d="M8,4V5.6 M8,7.2V8.8 M8,10.4V12" stroke="#444" stroke-width="1.7"/></svg>
<div style="left:1222px;top:209px;white-space:nowrap;font-size:12px;color:#000;font-weight:bold;line-height:16px">Euro 50 - Sep 2024</div>
<svg style="position:absolute;left:1409px;top:213px;" width="8" height="8" viewBox="0 0 8 8"><path d="M0,0 L4,8 L8,0 Z" fill="#e8141a"/></svg>
<div style="left:1422px;top:210px;white-space:nowrap;font-size:12px;color:#c3161c;line-height:15px">0,11 %</div>
<div style="left:1429px;top:210px;white-space:nowrap;font-size:12px;color:#c3161c;line-height:15px;width:80px;text-align:right">5,5</div>
<div style="left:1508px;top:209px;white-space:nowrap;font-size:12px;color:#111;line-height:15px;width:90px;text-align:right">4 932,5</div>
<div style="left:1608px;top:209px;white-space:nowrap;font-size:12px;color:#111;line-height:15px;width:90px;text-align:right">4 982,6</div>
<div style="left:1708px;top:210px;white-space:nowrap;font-size:12px;color:#4a3514;line-height:15px;width:90px;text-align:right">4 972,5</div>
<div style="left:1815px;top:210px;white-space:nowrap;font-size:12px;color:#1d4c5c;line-height:15px;width:90px;text-align:right">4 974,5</div>
<div style="left:1193px;top:227px;width:726px;height:20px;background:#fff"></div>
<svg style="position:absolute;left:1201px;top:229px;" width="16" height="16" viewBox="0 0 16 16"><circle cx="8" cy="8" r="7" fill="none" stroke="#7a8080" stroke-width="1.1"/><path d="M8,4V5.6 M8,7.2V8.8 M8,10.4V12" stroke="#444" stroke-width="1.7"/></svg>
<div style="left:1222px;top:229px;white-space:nowrap;font-size:12px;color:#000;font-weight:bold;line-height:16px">Allemagne 40 - Sep 2024</div>
<svg style="position:absolute;left:1409px;top:233px;" width="8" height="8" viewBox="0 0 8 8"><path d="M0,0 L4,8 L8,0 Z" fill="#e8141a"/></svg>
<div style="left:1422px;top:230px;white-space:nowrap;font-size:12px;color:#c3161c;line-height:15px">0,28 %</div>
<div style="left:1429px;top:230px;white-space:nowrap;font-size:12px;color:#c3161c;line-height:15px;width:80px;text-align:right">53,55</div>
<div style="left:1508px;top:229px;white-space:nowrap;font-size:12px;color:#111;line-height:15px;width:90px;text-align:right">18 811,0</div>
<div style="left:1608px;top:229px;white-space:nowrap;font-size:12px;color:#111;line-height:15px;width:90px;text-align:right">19 002,8</div>
<div style="left:1708px;top:230px;white-space:nowrap;font-size:12px;color:#4a3514;line-height:15px;width:90px;text-align:right">18 935,5</div>
<div style="left:1815px;top:230px;white-space:nowrap;font-size:12px;color:#1d4c5c;line-height:15px;width:90px;text-align:right">18 937,5</div>
<div style="left:1193px;top:247px;width:726px;height:20px;background:#f3f3f3"></div>
<svg style="position:absolute;left:1201px;top:249px;" width="16" height="16" viewBox="0 0 16 16"><circle cx="8" cy="8" r="7" fill="none" stroke="#7a8080" stroke-width="1.1"/><path d="M8,4V5.6 M8,7.2V8.8 M8,10.4V12" stroke="#444" stroke-width="1.7"/></svg>
<div style="left:1222px;top:249px;white-space:nowrap;font-size:12px;color:#000;font-weight:bold;line-height:16px">France 40 - Sep 2024</div>
<svg style="position:absolute;left:1409px;top:253px;" width="8" height="8" viewBox="0 0 8 8"><path d="M0,0 L4,8 L8,0 Z" fill="#e8141a"/></svg>
<div style="left:1422px;top:250px;white-space:nowrap;font-size:12px;color:#c3161c;line-height:15px">0,22 %</div>
<div style="left:1429px;top:250px;white-space:nowrap;font-size:12px;color:#c3161c;line-height:15px;width:80px;text-align:right">17,5</div>
<div style="left:1508px;top:249px;white-space:nowrap;font-size:12px;color:#111;line-height:15px;width:90px;text-align:right">7 587,5</div>
<div style="left:1608px;top:249px;white-space:nowrap;font-size:12px;color:#111;line-height:15px;width:90px;text-align:right">7 664,8</div>
<div style="left:1708px;top:250px;white-space:nowrap;font-size:12px;color:#4a3514;line-height:15px;width:90px;text-align:right">7 643,8</div>
<div style="left:1815px;top:250px;white-space:nowrap;font-size:12px;color:#1d4c5c;line-height:15px;width:90px;text-align:right">7 645,8</div>
<div style="left:1193px;top:267px;width:726px;height:20px;background:#fff"></div>
<svg style="position:absolute;left:1201px;top:269px;" width="16" height="16" viewBox="0 0 16 16"><circle cx="8" cy="8" r="7" fill="none" stroke="#7a8080" stroke-width="1.1"/><path d="M8,4V5.6 M8,7.2V8.8 M8,10.4V12" stroke="#444" stroke-width="1.7"/></svg>
<div style="left:1222px;top:269px;white-space:nowrap;font-size:12px;color:#000;font-weight:bold;line-height:16px">UK 100 - Sep 2024</div>
<svg style="position:absolute;left:1409px;top:273px;" width="8" height="8" viewBox="0 0 8 8"><path d="M0,0 L4,8 L8,0 Z" fill="#e8141a"/></svg>
<div style="left:1422px;top:270px;white-space:nowrap;font-size:12px;color:#c3161c;line-height:15px">0,38 %</div>
<div style="left:1429px;top:270px;white-space:nowrap;font-size:12px;color:#c3161c;line-height:15px;width:80px;text-align:right">32,5</div>
<div style="left:1508px;top:269px;white-space:nowrap;font-size:12px;color:#111;line-height:15px;width:90px;text-align:right">8 369,3</div>
<div style="left:1608px;top:269px;white-space:nowrap;font-size:12px;color:#111;line-height:15px;width:90px;text-align:right">8 425,8</div>
<div style="left:1708px;top:270px;white-space:nowrap;font-size:12px;color:#4a3514;line-height:15px;width:90px;text-align:right">8 390,8</div>
<div style="left:1815px;top:270px;white-space:nowrap;font-size:12px;color:#1d4c5c;line-height:15px;width:90px;text-align:right">8 392,8</div>
<div style="left:1193px;top:287px;width:726px;height:20px;background:#f3f3f3"></div>
<svg style="position:absolute;left:1201px;top:289px;" width="16" height="16" viewBox="0 0 16 16"><circle cx="8" cy="8" r="7" fill="none" stroke="#7a8080" stroke-width="1.1"/><path d="M8,4V5.6 M8,7.2V8.8 M8,10.4V12" stroke="#444" stroke-width="1.7"/></svg>
<div style="left:1222px;top:289px;white-space:nowrap;font-size:12px;color:#000;font-weight:bold;line-height:16px">Bitcoin (USD)</div>
<svg style="position:absolute;left:1409px;top:293px;" width="8" height="8" viewBox="0 0 8 8"><path d="M0,0 L4,8 L8,0 Z" fill="#e8141a"/></svg>
<div style="left:1422px;top:290px;white-space:nowrap;font-size:12px;color:#c3161c;line-height:15px">0,54 %</div>
<div style="left:1429px;top:290px;white-space:nowrap;font-size:12px;color:#c3161c;line-height:15px;width:80px;text-align:right">320,175</div>
<div style="left:1508px;top:289px;white-space:nowrap;font-size:12px;color:#111;line-height:15px;width:90px;text-align:right">57 087,145</div>
<div style="left:1608px;top:289px;white-space:nowrap;font-size:12px;color:#111;line-height:15px;width:90px;text-align:right">58 698,860</div>
<div style="left:1708px;top:290px;white-space:nowrap;font-size:12px;color:#4a3514;line-height:15px;width:90px;text-align:right">58 336,825</div>
<div style="left:1815px;top:290px;white-space:nowrap;font-size:12px;color:#1d4c5c;line-height:15px;width:90px;text-align:right">58 411,825</div>
<svg style="position:absolute;left:1802px;top:294px;" width="7" height="7" viewBox="0 0 7 7"><path d="M0,0 L3.5,7 L7,0 Z" fill="#e8141a"/></svg>
<div style="left:1193px;top:107px;width:726px;height:1px;background:#e0e0e0"></div>
<div style="left:1193px;top:355px;width:726px;height:21px;background:#dedfe1;border-top:1px solid #c8c8c8;border-bottom:1px solid #c8c8c8"></div>
<div style="left:1810px;top:355px;width:1px;height:21px;background:#c8c8c8"></div>
<div style="left:1820px;top:358px;white-space:nowrap;font-size:12px;color:#222;line-height:15px">Vue Classique</div>
<svg style="position:absolute;left:1904px;top:361px;" width="9" height="8" viewBox="0 0 9 8"><path d="M0,8 L4.5,0 L9,8 Z" fill="#777"/></svg>
<div style="left:1192px;top:384px;width:728px;height:31px;background:linear-gradient(#dcdcdc,#cbcbcb);border-bottom:1px solid #b4b4b4"></div>
<div style="left:1193px;top:384px;width:31px;height:31px;background:linear-gradient(#dadada,#cdcdcd);border:1px solid #bdbdbd;border-bottom:none"></div>
<svg style="position:absolute;left:1202px;top:394px;" width="14" height="13" viewBox="0 0 14 13"><path d="M1,1.2H11M1,5.5H11M1,9.8H11" stroke="#505050" stroke-width="2.2"/></svg>
<div style="left:1224px;top:384px;width:82px;height:31px;background:#fff;border-right:1px solid #bdbdbd"></div>
<div style="left:1232px;top:392px;white-space:nowrap;font-size:12px;color:#111;line-height:15px">ASIE</div>
<svg style="position:absolute;left:1267px;top:396px;" width="11" height="7" viewBox="0 0 11 7"><path d="M1,1 L5.5,5.5 L10,1" fill="none" stroke="#666" stroke-width="1.1"/></svg>
<svg style="position:absolute;left:1285px;top:392px;" width="16" height="16" viewBox="0 0 16 16"><circle cx="6" cy="6" r="5" fill="none" stroke="#555" stroke-width="1.1"/><path d="M6,3.5V8.5M3.5,6H8.5" stroke="#555" stroke-width="1"/><line x1="9.6" y1="9.6" x2="14" y2="14" stroke="#555" stroke-width="1.3"/></svg>
<svg style="position:absolute;left:1317px;top:394px;" width="11" height="11" viewBox="0 0 11 11"><path d="M5.5,0V11M0,5.5H11" stroke="#8a8a8a" stroke-width="1.6"/></svg>
<div style="left:1859px;top:386px;width:10px;height:28px;background:#c8c8c8"></div>
<div style="left:1859px;top:388px;width:10px;height:4px;background:#00d4f0"></div>
<div style="left:1859px;top:395px;width:10px;height:1px;background:#555"></div>
<div style="left:1859px;top:401px;width:10px;height:1px;background:#555"></div>
<div style="left:1859px;top:407px;width:10px;height:1px;background:#555"></div>
<svg style="position:absolute;left:1876px;top:394px;" width="12" height="12" viewBox="0 0 12 12"><path d="M2,10 L10,2 M7,1.5H10.5V5 M1.5,7V10.5H5" fill="none" stroke="#555" stroke-width="1"/></svg>
<svg style="position:absolute;left:1899px;top:395px;" width="10" height="10" viewBox="0 0 10 10"><path d="M1,1 L9,9 M9,1 L1,9" stroke="#555" stroke-width="1.1"/></svg>
<div style="left:1192px;top:415px;width:728px;height:160px;background:#f8f8f8;border-left:1px solid #b5b5b5;border-right:1px solid #c8c8c8;border-bottom:1px solid #c8c8c8"></div>
<div style="left:1193px;top:415px;width:726px;height:23px;background:#fff"></div>
<div style="left:1413px;top:415px;width:1px;height:123px;background:#ececec"></div>
<div style="left:1553px;top:415px;width:1px;height:123px;background:#ececec"></div>
<div style="left:1667px;top:415px;width:1px;height:123px;background:#ececec"></div>
<div style="left:1767px;top:415px;width:1px;height:123px;background:#ececec"></div>
<div style="left:1918px;top:415px;width:1px;height:123px;background:#ececec"></div>
<div style="left:1199px;top:421px;white-space:nowrap;font-size:9.6px;color:#666;font-weight:bold;line-height:12px">PRODUIT</div>
<svg style="position:absolute;left:1249px;top:421px;" width="6" height="11" viewBox="0 0 6 11"><path d="M0.5,4.5 L3,1 L5.5,4.5 Z M0.5,6.5 L3,10 L5.5,6.5 Z" fill="#666"/></svg>
<div style="left:1438px;top:421px;white-space:nowrap;font-size:9.6px;color:#666;font-weight:bold;line-height:12px">PERFORMANCE</div>
<svg style="position:absolute;left:1520px;top:421px;" width="6" height="11" viewBox="0 0 6 11"><path d="M0.5,4.5 L3,1 L5.5,4.5 Z M0.5,6.5 L3,10 L5.5,6.5 Z" fill="#666"/></svg>
<div style="left:1597px;top:421px;white-space:nowrap;font-size:9.6px;color:#666;font-weight:bold;line-height:12px">PLUS BAS</div>
<svg style="position:absolute;left:1652px;top:421px;" width="6" height="11" viewBox="0 0 6 11"><path d="M0.5,4.5 L3,1 L5.5,4.5 Z M0.5,6.5 L3,10 L5.5,6.5 Z" fill="#666"/></svg>
<div style="left:1691px;top:421px;white-space:nowrap;font-size:9.6px;color:#666;font-weight:bold;line-height:12px">PLUS HAUT</div>
<svg style="position:absolute;left:1752px;top:421px;" width="6" height="11" viewBox="0 0 6 11"><path d="M0.5,4.5 L3,1 L5.5,4.5 Z M0.5,6.5 L3,10 L5.5,6.5 Z" fill="#666"/></svg>
<div style="left:1804px;top:421px;white-space:nowrap;font-size:9.6px;color:#e08a10;font-weight:bold;line-height:12px">VENTE</div>
<div style="left:1878px;top:421px;white-space:nowrap;font-size:9.6px;color:#1ba6bf;font-weight:bold;line-height:12px">ACHAT</div>
<div style="left:1193px;top:438px;width:726px;height:20px;background:#fff"></div>
<svg style="position:absolute;left:1201px;top:440px;" width="16" height="16" viewBox="0 0 16 16"><circle cx="8" cy="8" r="7" fill="none" stroke="#7a8080" stroke-width="1.1"/><path d="M8,4V5.6 M8,7.2V8.8 M8,10.4V12" stroke="#444" stroke-width="1.7"/></svg>
<div style="left:1222px;top:440px;white-space:nowrap;font-size:12px;color:#000;font-weight:bold;line-height:16px">Japon 225 - Sep 2024</div>
<svg style="position:absolute;left:1423px;top:444px;" width="8" height="8" viewBox="0 0 8 8"><path d="M0,0 L4,8 L8,0 Z" fill="#e8141a"/></svg>
<div style="left:1437px;top:441px;white-space:nowrap;font-size:12px;color:#c3161c;line-height:15px">0,5 %</div>
<div style="left:1466px;top:441px;white-space:nowrap;font-size:12px;color:#c3161c;line-height:15px;width:80px;text-align:right">197,5</div>
<div style="left:1571px;top:440px;white-space:nowrap;font-size:12px;color:#111;line-height:15px;width:90px;text-align:right">38 470,0</div>
<div style="left:1671px;top:440px;white-space:nowrap;font-size:12px;color:#111;line-height:15px;width:90px;text-align:right">39 187,5</div>
<div style="left:1740px;top:441px;white-space:nowrap;font-size:12px;color:#4a3514;line-height:15px;width:90px;text-align:right">38 842,5</div>
<div style="left:1815px;top:441px;white-space:nowrap;font-size:12px;color:#1d4c5c;line-height:15px;width:90px;text-align:right">38 862,5</div>
<div style="left:1193px;top:458px;width:726px;height:20px;background:#f3f3f3"></div>
<svg style="position:absolute;left:1201px;top:460px;" width="16" height="16" viewBox="0 0 16 16"><circle cx="8" cy="8" r="7" fill="none" stroke="#7a8080" stroke-width="1.1"/><path d="M8,4V5.6 M8,7.2V8.8 M8,10.4V12" stroke="#444" stroke-width="1.7"/></svg>
<div style="left:1222px;top:460px;white-space:nowrap;font-size:12px;color:#000;font-weight:bold;line-height:16px">Hong Kong 50</div>
<svg style="position:absolute;left:1423px;top:464px;" width="8" height="8" viewBox="0 0 8 8"><path d="M0,0 L4,8 L8,0 Z" fill="#e8141a"/></svg>
<div style="left:1437px;top:461px;white-space:nowrap;font-size:12px;color:#c3161c;line-height:15px">0,93 %</div>
<div style="left:1466px;top:461px;white-space:nowrap;font-size:12px;color:#c3161c;line-height:15px;width:80px;text-align:right">166,2</div>
<div style="left:1571px;top:460px;white-space:nowrap;font-size:12px;color:#111;line-height:15px;width:90px;text-align:right">17 640,1</div>
<div style="left:1671px;top:460px;white-space:nowrap;font-size:12px;color:#111;line-height:15px;width:90px;text-align:right">17 829,7</div>
<div style="left:1740px;top:461px;white-space:nowrap;font-size:12px;color:#4a3514;line-height:15px;width:90px;text-align:right">17 660,2</div>
<div style="left:1815px;top:461px;white-space:nowrap;font-size:12px;color:#1d4c5c;line-height:15px;width:90px;text-align:right">17 665,2</div>
<div style="left:1193px;top:478px;width:726px;height:20px;background:#fff"></div>
<svg style="position:absolute;left:1201px;top:480px;" width="16" height="16" viewBox="0 0 16 16"><circle cx="8" cy="8" r="7" fill="none" stroke="#7a8080" stroke-width="1.1"/><path d="M8,4V5.6 M8,7.2V8.8 M8,10.4V12" stroke="#444" stroke-width="1.7"/></svg>
<div style="left:1222px;top:480px;white-space:nowrap;font-size:12px;color:#000;font-weight:bold;line-height:16px">Hong Kong Chine H-shares -...</div>
<svg style="position:absolute;left:1423px;top:484px;" width="8" height="8" viewBox="0 0 8 8"><path d="M0,0 L4,8 L8,0 Z" fill="#e8141a"/></svg>
<div style="left:1437px;top:481px;white-space:nowrap;font-size:12px;color:#c3161c;line-height:15px">0,94 %</div>
<div style="left:1466px;top:481px;white-space:nowrap;font-size:12px;color:#c3161c;line-height:15px;width:80px;text-align:right">59,3</div>
<div style="left:1571px;top:480px;white-space:nowrap;font-size:12px;color:#111;line-height:15px;width:90px;text-align:right">6 184,9</div>
<div style="left:1671px;top:480px;white-space:nowrap;font-size:12px;color:#111;line-height:15px;width:90px;text-align:right">6 281,4</div>
<div style="left:1740px;top:481px;white-space:nowrap;font-size:12px;color:#4a3514;line-height:15px;width:90px;text-align:right">6 185,9</div>
<div style="left:1815px;top:481px;white-space:nowrap;font-size:12px;color:#1d4c5c;line-height:15px;width:90px;text-align:right">6 203,9</div>
<div style="left:1193px;top:498px;width:726px;height:20px;background:#f3f3f3"></div>
<svg style="position:absolute;left:1201px;top:500px;" width="16" height="16" viewBox="0 0 16 16"><circle cx="8" cy="8" r="7" fill="none" stroke="#7a8080" stroke-width="1.1"/><path d="M8,4V5.6 M8,7.2V8.8 M8,10.4V12" stroke="#444" stroke-width="1.7"/></svg>
<div style="left:1222px;top:500px;white-space:nowrap;font-size:12px;color:#000;font-weight:bold;line-height:16px">Australie 200</div>
<svg style="position:absolute;left:1423px;top:504px;" width="8" height="8" viewBox="0 0 8 8"><path d="M0,8 L4,0 L8,8 Z" fill="#2f8a12"/></svg>
<div style="left:1437px;top:501px;white-space:nowrap;font-size:12px;color:#3b8c12;line-height:15px">0,42 %</div>
<div style="left:1466px;top:501px;white-space:nowrap;font-size:12px;color:#3b8c12;line-height:15px;width:80px;text-align:right">34,11</div>
<div style="left:1571px;top:500px;white-space:nowrap;font-size:12px;color:#111;line-height:15px;width:90px;text-align:right">8 043,22</div>
<div style="left:1671px;top:500px;white-space:nowrap;font-size:12px;color:#111;line-height:15px;width:90px;text-align:right">8 118,30</div>
<div style="left:1740px;top:501px;white-space:nowrap;font-size:12px;color:#4a3514;line-height:15px;width:90px;text-align:right">8 102,77</div>
<div style="left:1815px;top:501px;white-space:nowrap;font-size:12px;color:#1d4c5c;line-height:15px;width:90px;text-align:right">8 104,77</div>
<div style="left:1193px;top:518px;width:726px;height:20px;background:#fff"></div>
<svg style="position:absolute;left:1201px;top:520px;" width="16" height="16" viewBox="0 0 16 16"><circle cx="8" cy="8" r="7" fill="none" stroke="#7a8080" stroke-width="1.1"/><path d="M8,4V5.6 M8,7.2V8.8 M8,10.4V12" stroke="#444" stroke-width="1.7"/></svg>
<div style="left:1222px;top:520px;white-space:nowrap;font-size:12px;color:#000;font-weight:bold;line-height:16px">Chine A50 - Sep 2024</div>
<svg style="position:absolute;left:1423px;top:524px;" width="8" height="8" viewBox="0 0 8 8"><path d="M0,0 L4,8 L8,0 Z" fill="#e8141a"/></svg>
<div style="left:1437px;top:521px;white-space:nowrap;font-size:12px;color:#c3161c;line-height:15px">1,36 %</div>
<div style="left:1466px;top:521px;white-space:nowrap;font-size:12px;color:#c3161c;line-height:15px;width:80px;text-align:right">159,5</div>
<div style="left:1571px;top:520px;white-space:nowrap;font-size:12px;color:#111;line-height:15px;width:90px;text-align:right">11 536,5</div>
<div style="left:1671px;top:520px;white-space:nowrap;font-size:12px;color:#111;line-height:15px;width:90px;text-align:right">11 712,0</div>
<div style="left:1740px;top:521px;white-space:nowrap;font-size:12px;color:#4a3514;line-height:15px;width:90px;text-align:right">11 537,5</div>
<div style="left:1815px;top:521px;white-space:nowrap;font-size:12px;color:#1d4c5c;line-height:15px;width:90px;text-align:right">11 547,5</div>
<div style="left:1193px;top:438px;width:726px;height:1px;background:#e0e0e0"></div>
<div style="left:1192px;top:583px;width:728px;height:31px;background:linear-gradient(#dcdcdc,#cbcbcb);border-bottom:1px solid #b4b4b4"></div>
<div style="left:1193px;top:583px;width:31px;height:31px;background:linear-gradient(#dadada,#cdcdcd);border:1px solid #bdbdbd;border-bottom:none"></div>
<svg style="position:absolute;left:1202px;top:593px;" width="14" height="13" viewBox="0 0 14 13"><path d="M1,1.2H11M1,5.5H11M1,9.8H11" stroke="#505050" stroke-width="2.2"/></svg>
<div style="left:1224px;top:583px;width:140px;height:31px;background:#fff;border-right:1px solid #bdbdbd"></div>
<div style="left:1232px;top:591px;white-space:nowrap;font-size:12px;color:#111;line-height:15px">Devise Taux Vix</div>
<svg style="position:absolute;left:1325px;top:595px;" width="11" height="7" viewBox="0 0 11 7"><path d="M1,1 L5.5,5.5 L10,1" fill="none" stroke="#666" stroke-width="1.1"/></svg>
<svg style="position:absolute;left:1343px;top:591px;" width="16" height="16" viewBox="0 0 16 16"><circle cx="6" cy="6" r="5" fill="none" stroke="#555" stroke-width="1.1"/><path d="M6,3.5V8.5M3.5,6H8.5" stroke="#555" stroke-width="1"/><line x1="9.6" y1="9.6" x2="14" y2="14" stroke="#555" stroke-width="1.3"/></svg>
<svg style="position:absolute;left:1375px;top:593px;" width="11" height="11" viewBox="0 0 11 11"><path d="M5.5,0V11M0,5.5H11" stroke="#8a8a8a" stroke-width="1.6"/></svg>
<div style="left:1859px;top:585px;width:10px;height:28px;background:#c8c8c8"></div>
<div style="left:1859px;top:587px;width:10px;height:4px;background:#00d4f0"></div>
<div style="left:1859px;top:594px;width:10px;height:1px;background:#555"></div>
<div style="left:1859px;top:600px;width:10px;height:1px;background:#555"></div>
<div style="left:1859px;top:606px;width:10px;height:1px;background:#555"></div>
<svg style="position:absolute;left:1876px;top:593px;" width="12" height="12" viewBox="0 0 12 12"><path d="M2,10 L10,2 M7,1.5H10.5V5 M1.5,7V10.5H5" fill="none" stroke="#555" stroke-width="1"/></svg>
<svg style="position:absolute;left:1899px;top:594px;" width="10" height="10" viewBox="0 0 10 10"><path d="M1,1 L9,9 M9,1 L1,9" stroke="#555" stroke-width="1.1"/></svg>
<div style="left:1192px;top:614px;width:728px;height:251px;background:#f8f8f8;border-left:1px solid #b5b5b5;border-right:1px solid #c8c8c8;border-bottom:1px solid #c8c8c8"></div>
<div style="left:1193px;top:614px;width:726px;height:23px;background:#fff"></div>
<div style="left:1416px;top:614px;width:1px;height:183px;background:#ececec"></div>
<div style="left:1556px;top:614px;width:1px;height:183px;background:#ececec"></div>
<div style="left:1616px;top:614px;width:1px;height:183px;background:#ececec"></div>
<div style="left:1716px;top:614px;width:1px;height:183px;background:#ececec"></div>
<div style="left:1918px;top:614px;width:1px;height:183px;background:#ececec"></div>
<div style="left:1199px;top:620px;white-space:nowrap;font-size:9.6px;color:#666;font-weight:bold;line-height:12px">PRODUIT</div>
<svg style="position:absolute;left:1249px;top:620px;" width="6" height="11" viewBox="0 0 6 11"><path d="M0.5,4.5 L3,1 L5.5,4.5 Z M0.5,6.5 L3,10 L5.5,6.5 Z" fill="#666"/></svg>
<div style="left:1441px;top:620px;white-space:nowrap;font-size:9.6px;color:#666;font-weight:bold;line-height:12px">PERFORMANCE</div>
<svg style="position:absolute;left:1523px;top:620px;" width="6" height="11" viewBox="0 0 6 11"><path d="M0.5,4.5 L3,1 L5.5,4.5 Z M0.5,6.5 L3,10 L5.5,6.5 Z" fill="#666"/></svg>
<div style="left:1563px;top:620px;white-space:nowrap;font-size:9.6px;color:#666;font-weight:bold;line-height:12px">PLU...</div>
<svg style="position:absolute;left:1605px;top:620px;" width="6" height="11" viewBox="0 0 6 11"><path d="M0.5,4.5 L3,1 L5.5,4.5 Z M0.5,6.5 L3,10 L5.5,6.5 Z" fill="#666"/></svg>
<div style="left:1640px;top:620px;white-space:nowrap;font-size:9.6px;color:#666;font-weight:bold;line-height:12px">PLUS HAUT</div>
<svg style="position:absolute;left:1701px;top:620px;" width="6" height="11" viewBox="0 0 6 11"><path d="M0.5,4.5 L3,1 L5.5,4.5 Z M0.5,6.5 L3,10 L5.5,6.5 Z" fill="#666"/></svg>
<div style="left:1779px;top:620px;white-space:nowrap;font-size:9.6px;color:#e08a10;font-weight:bold;line-height:12px">VENTE</div>
<div style="left:1878px;top:620px;white-space:nowrap;font-size:9.6px;color:#1ba6bf;font-weight:bold;line-height:12px">ACHAT</div>
<div style="left:1193px;top:637px;width:726px;height:20px;background:#fff"></div>
<svg style="position:absolute;left:1201px;top:639px;" width="16" height="16" viewBox="0 0 16 16"><circle cx="8" cy="8" r="7" fill="none" stroke="#7a8080" stroke-width="1.1"/><path d="M8,4V5.6 M8,7.2V8.8 M8,10.4V12" stroke="#444" stroke-width="1.7"/></svg>
<div style="left:1222px;top:639px;white-space:nowrap;font-size:12px;color:#000;font-weight:bold;line-height:16px">US Dollar Index - Sep 2024</div>
<svg style="position:absolute;left:1427px;top:643px;" width="8" height="8" viewBox="0 0 8 8"><path d="M0,8 L4,0 L8,8 Z" fill="#2f8a12"/></svg>
<div style="left:1439px;top:640px;white-space:nowrap;font-size:12px;color:#3b8c12;line-height:15px">0,02 %</div>
<div style="left:1470px;top:640px;white-space:nowrap;font-size:12px;color:#3b8c12;line-height:15px;width:80px;text-align:right">3</div>
<div style="left:1520px;top:639px;white-space:nowrap;font-size:12px;color:#111;line-height:15px;width:90px;text-align:right">101,488</div>
<div style="left:1620px;top:639px;white-space:nowrap;font-size:12px;color:#111;line-height:15px;width:90px;text-align:right">101,743</div>
<div style="left:1715px;top:640px;white-space:nowrap;font-size:12px;color:#4a3514;line-height:15px;width:90px;text-align:right">101,648</div>
<div style="left:1815px;top:640px;white-space:nowrap;font-size:12px;color:#1d4c5c;line-height:15px;width:90px;text-align:right">101,678</div>
<div style="left:1193px;top:657px;width:726px;height:20px;background:#f3f3f3"></div>
<svg style="position:absolute;left:1201px;top:659px;" width="16" height="16" viewBox="0 0 16 16"><circle cx="8" cy="8" r="7" fill="none" stroke="#7a8080" stroke-width="1.1"/><path d="M8,4V5.6 M8,7.2V8.8 M8,10.4V12" stroke="#444" stroke-width="1.7"/></svg>
<div style="left:1222px;top:659px;white-space:nowrap;font-size:12px;color:#000;font-weight:bold;line-height:16px">EUR/USD</div>
<svg style="position:absolute;left:1427px;top:663px;" width="8" height="8" viewBox="0 0 8 8"><path d="M0,8 L4,0 L8,8 Z" fill="#2f8a12"/></svg>
<div style="left:1439px;top:660px;white-space:nowrap;font-size:12px;color:#3b8c12;line-height:15px">0,11 %</div>
<div style="left:1470px;top:660px;white-space:nowrap;font-size:12px;color:#3b8c12;line-height:15px;width:80px;text-align:right">12,6</div>
<div style="left:1520px;top:659px;white-space:nowrap;font-size:12px;color:#111;line-height:15px;width:90px;text-align:right">1,10413</div>
<div style="left:1620px;top:659px;white-space:nowrap;font-size:12px;color:#111;line-height:15px;width:90px;text-align:right">1,10782</div>
<div style="left:1715px;top:660px;white-space:nowrap;font-size:12px;color:#4a3514;line-height:15px;width:90px;text-align:right">1,10598</div>
<div style="left:1815px;top:660px;white-space:nowrap;font-size:12px;color:#1d4c5c;line-height:15px;width:90px;text-align:right">1,10605</div>
<div style="left:1193px;top:677px;width:726px;height:20px;background:#fff"></div>
<svg style="position:absolute;left:1201px;top:679px;" width="16" height="16" viewBox="0 0 16 16"><circle cx="8" cy="8" r="7" fill="none" stroke="#7a8080" stroke-width="1.1"/><path d="M8,4V5.6 M8,7.2V8.8 M8,10.4V12" stroke="#444" stroke-width="1.7"/></svg>
<div style="left:1222px;top:679px;white-space:nowrap;font-size:12px;color:#000;font-weight:bold;line-height:16px">Euro Bund - Sep 2024</div>
<svg style="position:absolute;left:1427px;top:683px;" width="8" height="8" viewBox="0 0 8 8"><path d="M0,0 L4,8 L8,0 Z" fill="#e8141a"/></svg>
<div style="left:1439px;top:680px;white-space:nowrap;font-size:12px;color:#c3161c;line-height:15px">0,12 %</div>
<div style="left:1470px;top:680px;white-space:nowrap;font-size:12px;color:#c3161c;line-height:15px;width:80px;text-align:right">17</div>
<div style="left:1520px;top:679px;white-space:nowrap;font-size:12px;color:#111;line-height:15px;width:90px;text-align:right">133,241</div>
<div style="left:1620px;top:679px;white-space:nowrap;font-size:12px;color:#111;line-height:15px;width:90px;text-align:right">133,639</div>
<div style="left:1715px;top:680px;white-space:nowrap;font-size:12px;color:#4a3514;line-height:15px;width:90px;text-align:right">133,381</div>
<div style="left:1815px;top:680px;white-space:nowrap;font-size:12px;color:#1d4c5c;line-height:15px;width:90px;text-align:right">133,409</div>
<div style="left:1193px;top:697px;width:726px;height:20px;background:#f3f3f3"></div>
<svg style="position:absolute;left:1201px;top:699px;" width="16" height="16" viewBox="0 0 16 16"><circle cx="8" cy="8" r="7" fill="none" stroke="#7a8080" stroke-width="1.1"/><path d="M8,4V5.6 M8,7.2V8.8 M8,10.4V12" stroke="#444" stroke-width="1.7"/></svg>
<div style="left:1222px;top:699px;white-space:nowrap;font-size:12px;color:#000;font-weight:bold;line-height:16px">Euro OAT - Sep 2024</div>
<svg style="position:absolute;left:1427px;top:703px;" width="8" height="8" viewBox="0 0 8 8"><path d="M0,0 L4,8 L8,0 Z" fill="#e8141a"/></svg>
<div style="left:1439px;top:700px;white-space:nowrap;font-size:12px;color:#c3161c;line-height:15px">0,03 %</div>
<div style="left:1470px;top:700px;white-space:nowrap;font-size:12px;color:#c3161c;line-height:15px;width:80px;text-align:right">5</div>
<div style="left:1520px;top:699px;white-space:nowrap;font-size:12px;color:#111;line-height:15px;width:90px;text-align:right">125,425</div>
<div style="left:1620px;top:699px;white-space:nowrap;font-size:12px;color:#111;line-height:15px;width:90px;text-align:right">125,655</div>
<div style="left:1715px;top:700px;white-space:nowrap;font-size:12px;color:#4a3514;line-height:15px;width:90px;text-align:right">125,605</div>
<div style="left:1815px;top:700px;white-space:nowrap;font-size:12px;color:#1d4c5c;line-height:15px;width:90px;text-align:right">125,645</div>
<div style="left:1193px;top:717px;width:726px;height:20px;background:#fff"></div>
<svg style="position:absolute;left:1201px;top:719px;" width="16" height="16" viewBox="0 0 16 16"><circle cx="8" cy="8" r="7" fill="none" stroke="#7a8080" stroke-width="1.1"/><path d="M8,4V5.6 M8,7.2V8.8 M8,10.4V12" stroke="#444" stroke-width="1.7"/></svg>
<div style="left:1222px;top:719px;white-space:nowrap;font-size:12px;color:#000;font-weight:bold;line-height:16px">US T-Note 2 YR - Déc 2024</div>
<svg style="position:absolute;left:1427px;top:723px;" width="8" height="8" viewBox="0 0 8 8"><path d="M0,0 L4,8 L8,0 Z" fill="#e8141a"/></svg>
<div style="left:1439px;top:720px;white-space:nowrap;font-size:12px;color:#c3161c;line-height:15px">0,02 %</div>
<div style="left:1470px;top:720px;white-space:nowrap;font-size:12px;color:#c3161c;line-height:15px;width:80px;text-align:right">2,7</div>
<div style="left:1520px;top:719px;white-space:nowrap;font-size:12px;color:#111;line-height:15px;width:90px;text-align:right">103,738</div>
<div style="left:1620px;top:719px;white-space:nowrap;font-size:12px;color:#111;line-height:15px;width:90px;text-align:right">103,809</div>
<div style="left:1715px;top:720px;white-space:nowrap;font-size:12px;color:#4a3514;line-height:15px;width:90px;text-align:right">103,758</div>
<div style="left:1815px;top:720px;white-space:nowrap;font-size:12px;color:#1d4c5c;line-height:15px;width:90px;text-align:right">103,778</div>
<div style="left:1193px;top:737px;width:726px;height:20px;background:#f3f3f3"></div>
<svg style="position:absolute;left:1201px;top:739px;" width="16" height="16" viewBox="0 0 16 16"><circle cx="8" cy="8" r="7" fill="none" stroke="#7a8080" stroke-width="1.1"/><path d="M8,4V5.6 M8,7.2V8.8 M8,10.4V12" stroke="#444" stroke-width="1.7"/></svg>
<div style="left:1222px;top:739px;white-space:nowrap;font-size:12px;color:#000;font-weight:bold;line-height:16px">US T-Note 5 YR - Déc 2024</div>
<svg style="position:absolute;left:1427px;top:743px;" width="8" height="8" viewBox="0 0 8 8"><path d="M0,0 L4,8 L8,0 Z" fill="#e8141a"/></svg>
<div style="left:1439px;top:740px;white-space:nowrap;font-size:12px;color:#c3161c;line-height:15px">0,08 %</div>
<div style="left:1470px;top:740px;white-space:nowrap;font-size:12px;color:#c3161c;line-height:15px;width:80px;text-align:right">9,4</div>
<div style="left:1520px;top:739px;white-space:nowrap;font-size:12px;color:#111;line-height:15px;width:90px;text-align:right">109,306</div>
<div style="left:1620px;top:739px;white-space:nowrap;font-size:12px;color:#111;line-height:15px;width:90px;text-align:right">109,459</div>
<div style="left:1715px;top:740px;white-space:nowrap;font-size:12px;color:#4a3514;line-height:15px;width:90px;text-align:right">109,345</div>
<div style="left:1815px;top:740px;white-space:nowrap;font-size:12px;color:#1d4c5c;line-height:15px;width:90px;text-align:right">109,365</div>
<div style="left:1193px;top:757px;width:726px;height:20px;background:#fff"></div>
<svg style="position:absolute;left:1201px;top:759px;" width="16" height="16" viewBox="0 0 16 16"><circle cx="8" cy="8" r="7" fill="none" stroke="#7a8080" stroke-width="1.1"/><path d="M8,4V5.6 M8,7.2V8.8 M8,10.4V12" stroke="#444" stroke-width="1.7"/></svg>
<div style="left:1222px;top:759px;white-space:nowrap;font-size:12px;color:#000;font-weight:bold;line-height:16px">US T-Note 10 YR - Déc 2024</div>
<svg style="position:absolute;left:1427px;top:763px;" width="8" height="8" viewBox="0 0 8 8"><path d="M0,0 L4,8 L8,0 Z" fill="#e8141a"/></svg>
<div style="left:1439px;top:760px;white-space:nowrap;font-size:12px;color:#c3161c;line-height:15px">0,15 %</div>
<div style="left:1470px;top:760px;white-space:nowrap;font-size:12px;color:#c3161c;line-height:15px;width:80px;text-align:right">17,2</div>
<div style="left:1520px;top:759px;white-space:nowrap;font-size:12px;color:#111;line-height:15px;width:90px;text-align:right">113,363</div>
<div style="left:1620px;top:759px;white-space:nowrap;font-size:12px;color:#111;line-height:15px;width:90px;text-align:right">113,637</div>
<div style="left:1715px;top:760px;white-space:nowrap;font-size:12px;color:#4a3514;line-height:15px;width:90px;text-align:right">113,425</div>
<div style="left:1815px;top:760px;white-space:nowrap;font-size:12px;color:#1d4c5c;line-height:15px;width:90px;text-align:right">113,465</div>
<div style="left:1193px;top:777px;width:726px;height:20px;background:#f3f3f3"></div>
<svg style="position:absolute;left:1201px;top:779px;" width="16" height="16" viewBox="0 0 16 16"><circle cx="8" cy="8" r="7" fill="none" stroke="#7a8080" stroke-width="1.1"/><path d="M8,4V5.6 M8,7.2V8.8 M8,10.4V12" stroke="#444" stroke-width="1.7"/></svg>
<div style="left:1222px;top:779px;white-space:nowrap;font-size:12px;color:#000;font-weight:bold;line-height:16px">Volatility Index - Sep 2024</div>
<svg style="position:absolute;left:1427px;top:783px;" width="8" height="8" viewBox="0 0 8 8"><path d="M0,8 L4,0 L8,8 Z" fill="#2f8a12"/></svg>
<div style="left:1439px;top:780px;white-space:nowrap;font-size:12px;color:#3b8c12;line-height:15px">0,32 %</div>
<div style="left:1470px;top:780px;white-space:nowrap;font-size:12px;color:#3b8c12;line-height:15px;width:80px;text-align:right">0,05</div>
<div style="left:1520px;top:779px;white-space:nowrap;font-size:12px;color:#111;line-height:15px;width:90px;text-align:right">15,300</div>
<div style="left:1620px;top:779px;white-space:nowrap;font-size:12px;color:#111;line-height:15px;width:90px;text-align:right">15,775</div>
<div style="left:1715px;top:780px;white-space:nowrap;font-size:12px;color:#4a3514;line-height:15px;width:90px;text-align:right">15,435</div>
<div style="left:1815px;top:780px;white-space:nowrap;font-size:12px;color:#1d4c5c;line-height:15px;width:90px;text-align:right">15,515</div>
<div style="left:1193px;top:637px;width:726px;height:1px;background:#e0e0e0"></div>
<div style="left:1193px;top:843px;width:726px;height:21px;background:#dedfe1;border-top:1px solid #c8c8c8;border-bottom:1px solid #c8c8c8"></div>
<div style="left:1810px;top:843px;width:1px;height:21px;background:#c8c8c8"></div>
<div style="left:1820px;top:846px;white-space:nowrap;font-size:12px;color:#222;line-height:15px">Vue Classique</div>
<svg style="position:absolute;left:1904px;top:849px;" width="9" height="8" viewBox="0 0 9 8"><path d="M0,8 L4.5,0 L9,8 Z" fill="#777"/></svg>
<div style="left:1192px;top:871px;width:728px;height:31px;background:linear-gradient(#dcdcdc,#cbcbcb);border-bottom:1px solid #b4b4b4"></div>
<div style="left:1193px;top:871px;width:31px;height:31px;background:linear-gradient(#dadada,#cdcdcd);border:1px solid #bdbdbd;border-bottom:none"></div>
<svg style="position:absolute;left:1202px;top:881px;" width="14" height="13" viewBox="0 0 14 13"><path d="M1,1.2H11M1,5.5H11M1,9.8H11" stroke="#505050" stroke-width="2.2"/></svg>
<div style="left:1224px;top:871px;width:126px;height:31px;background:#fff;border-right:1px solid #bdbdbd"></div>
<div style="left:1232px;top:879px;white-space:nowrap;font-size:12px;color:#111;line-height:15px">Commodities</div>
<svg style="position:absolute;left:1309px;top:883px;" width="11" height="7" viewBox="0 0 11 7"><path d="M1,1 L5.5,5.5 L10,1" fill="none" stroke="#666" stroke-width="1.1"/></svg>
<svg style="position:absolute;left:1327px;top:879px;" width="16" height="16" viewBox="0 0 16 16"><circle cx="6" cy="6" r="5" fill="none" stroke="#555" stroke-width="1.1"/><path d="M6,3.5V8.5M3.5,6H8.5" stroke="#555" stroke-width="1"/><line x1="9.6" y1="9.6" x2="14" y2="14" stroke="#555" stroke-width="1.3"/></svg>
<svg style="position:absolute;left:1361px;top:881px;" width="11" height="11" viewBox="0 0 11 11"><path d="M5.5,0V11M0,5.5H11" stroke="#8a8a8a" stroke-width="1.6"/></svg>
<div style="left:1859px;top:873px;width:10px;height:28px;background:#c8c8c8"></div>
<div style="left:1859px;top:875px;width:10px;height:4px;background:#00d4f0"></div>
<div style="left:1859px;top:882px;width:10px;height:1px;background:#555"></div>
<div style="left:1859px;top:888px;width:10px;height:1px;background:#555"></div>
<div style="left:1859px;top:894px;width:10px;height:1px;background:#555"></div>
<svg style="position:absolute;left:1876px;top:881px;" width="12" height="12" viewBox="0 0 12 12"><path d="M2,10 L10,2 M7,1.5H10.5V5 M1.5,7V10.5H5" fill="none" stroke="#555" stroke-width="1"/></svg>
<svg style="position:absolute;left:1899px;top:882px;" width="10" height="10" viewBox="0 0 10 10"><path d="M1,1 L9,9 M9,1 L1,9" stroke="#555" stroke-width="1.1"/></svg>
<div style="left:1192px;top:902px;width:728px;height:177px;background:#f8f8f8;border-left:1px solid #b5b5b5;border-right:1px solid #c8c8c8;border-bottom:1px solid #c8c8c8"></div>
<div style="left:1193px;top:902px;width:726px;height:23px;background:#fff"></div>
<div style="left:1406px;top:902px;width:1px;height:143px;background:#ececec"></div>
<div style="left:1546px;top:902px;width:1px;height:143px;background:#ececec"></div>
<div style="left:1646px;top:902px;width:1px;height:143px;background:#ececec"></div>
<div style="left:1746px;top:902px;width:1px;height:143px;background:#ececec"></div>
<div style="left:1918px;top:902px;width:1px;height:143px;background:#ececec"></div>
<div style="left:1199px;top:908px;white-space:nowrap;font-size:9.6px;color:#666;font-weight:bold;line-height:12px">PRODUIT</div>
<svg style="position:absolute;left:1249px;top:908px;" width="6" height="11" viewBox="0 0 6 11"><path d="M0.5,4.5 L3,1 L5.5,4.5 Z M0.5,6.5 L3,10 L5.5,6.5 Z" fill="#666"/></svg>
<div style="left:1431px;top:908px;white-space:nowrap;font-size:9.6px;color:#666;font-weight:bold;line-height:12px">PERFORMANCE</div>
<svg style="position:absolute;left:1513px;top:908px;" width="6" height="11" viewBox="0 0 6 11"><path d="M0.5,4.5 L3,1 L5.5,4.5 Z M0.5,6.5 L3,10 L5.5,6.5 Z" fill="#666"/></svg>
<div style="left:1576px;top:908px;white-space:nowrap;font-size:9.6px;color:#666;font-weight:bold;line-height:12px">PLUS BAS</div>
<svg style="position:absolute;left:1631px;top:908px;" width="6" height="11" viewBox="0 0 6 11"><path d="M0.5,4.5 L3,1 L5.5,4.5 Z M0.5,6.5 L3,10 L5.5,6.5 Z" fill="#666"/></svg>
<div style="left:1670px;top:908px;white-space:nowrap;font-size:9.6px;color:#666;font-weight:bold;line-height:12px">PLUS HAUT</div>
<svg style="position:absolute;left:1731px;top:908px;" width="6" height="11" viewBox="0 0 6 11"><path d="M0.5,4.5 L3,1 L5.5,4.5 Z M0.5,6.5 L3,10 L5.5,6.5 Z" fill="#666"/></svg>
<div style="left:1794px;top:908px;white-space:nowrap;font-size:9.6px;color:#e08a10;font-weight:bold;line-height:12px">VENTE</div>
<div style="left:1878px;top:908px;white-space:nowrap;font-size:9.6px;color:#1ba6bf;font-weight:bold;line-height:12px">ACHAT</div>
<div style="left:1193px;top:925px;width:726px;height:20px;background:#fff"></div>
<svg style="position:absolute;left:1201px;top:927px;" width="16" height="16" viewBox="0 0 16 16"><circle cx="8" cy="8" r="7" fill="none" stroke="#7a8080" stroke-width="1.1"/><path d="M8,4V5.6 M8,7.2V8.8 M8,10.4V12" stroke="#444" stroke-width="1.7"/></svg>
<div style="left:1222px;top:927px;white-space:nowrap;font-size:12px;color:#000;font-weight:bold;line-height:16px">Or</div>
<svg style="position:absolute;left:1417px;top:931px;" width="8" height="8" viewBox="0 0 8 8"><path d="M0,0 L4,8 L8,0 Z" fill="#e8141a"/></svg>
<div style="left:1429px;top:928px;white-space:nowrap;font-size:12px;color:#c3161c;line-height:15px">0,06 %</div>
<div style="left:1459px;top:928px;white-space:nowrap;font-size:12px;color:#c3161c;line-height:15px;width:80px;text-align:right">1,625</div>
<div style="left:1550px;top:927px;white-space:nowrap;font-size:12px;color:#111;line-height:15px;width:90px;text-align:right">2 489,93</div>
<div style="left:1649px;top:927px;white-space:nowrap;font-size:12px;color:#111;line-height:15px;width:90px;text-align:right">2 507,33</div>
<div style="left:1730px;top:928px;white-space:nowrap;font-size:12px;color:#4a3514;line-height:15px;width:90px;text-align:right">2 501,43</div>
<div style="left:1815px;top:928px;white-space:nowrap;font-size:12px;color:#1d4c5c;line-height:15px;width:90px;text-align:right">2 501,78</div>
<div style="left:1193px;top:945px;width:726px;height:20px;background:#f3f3f3"></div>
<svg style="position:absolute;left:1201px;top:947px;" width="16" height="16" viewBox="0 0 16 16"><circle cx="8" cy="8" r="7" fill="none" stroke="#7a8080" stroke-width="1.1"/><path d="M8,4V5.6 M8,7.2V8.8 M8,10.4V12" stroke="#444" stroke-width="1.7"/></svg>
<div style="left:1222px;top:947px;white-space:nowrap;font-size:12px;color:#000;font-weight:bold;line-height:16px">Argent</div>
<svg style="position:absolute;left:1417px;top:951px;" width="8" height="8" viewBox="0 0 8 8"><path d="M0,0 L4,8 L8,0 Z" fill="#e8141a"/></svg>
<div style="left:1429px;top:948px;white-space:nowrap;font-size:12px;color:#c3161c;line-height:15px">0,87 %</div>
<div style="left:1459px;top:948px;white-space:nowrap;font-size:12px;color:#c3161c;line-height:15px;width:80px;text-align:right">25,2</div>
<div style="left:1550px;top:947px;white-space:nowrap;font-size:12px;color:#111;line-height:15px;width:90px;text-align:right">28,313</div>
<div style="left:1649px;top:947px;white-space:nowrap;font-size:12px;color:#111;line-height:15px;width:90px;text-align:right">28,984</div>
<div style="left:1730px;top:948px;white-space:nowrap;font-size:12px;color:#4a3514;line-height:15px;width:90px;text-align:right">28,598</div>
<div style="left:1815px;top:948px;white-space:nowrap;font-size:12px;color:#1d4c5c;line-height:15px;width:90px;text-align:right">28,623</div>
<div style="left:1193px;top:965px;width:726px;height:20px;background:#fff"></div>
<svg style="position:absolute;left:1201px;top:967px;" width="16" height="16" viewBox="0 0 16 16"><circle cx="8" cy="8" r="7" fill="none" stroke="#7a8080" stroke-width="1.1"/><path d="M8,4V5.6 M8,7.2V8.8 M8,10.4V12" stroke="#444" stroke-width="1.7"/></svg>
<div style="left:1222px;top:967px;white-space:nowrap;font-size:12px;color:#000;font-weight:bold;line-height:16px">Pétrole Brut Brent</div>
<svg style="position:absolute;left:1417px;top:971px;" width="8" height="8" viewBox="0 0 8 8"><path d="M0,0 L4,8 L8,0 Z" fill="#e8141a"/></svg>
<div style="left:1429px;top:968px;white-space:nowrap;font-size:12px;color:#c3161c;line-height:15px">0,4 %</div>
<div style="left:1459px;top:968px;white-space:nowrap;font-size:12px;color:#c3161c;line-height:15px;width:80px;text-align:right">31,7</div>
<div style="left:1550px;top:967px;white-space:nowrap;font-size:12px;color:#111;line-height:15px;width:90px;text-align:right">76,915</div>
<div style="left:1649px;top:967px;white-space:nowrap;font-size:12px;color:#111;line-height:15px;width:90px;text-align:right">77,969</div>
<div style="left:1730px;top:968px;white-space:nowrap;font-size:12px;color:#4a3514;line-height:15px;width:90px;text-align:right">77,495</div>
<div style="left:1815px;top:968px;white-space:nowrap;font-size:12px;color:#1d4c5c;line-height:15px;width:90px;text-align:right">77,525</div>
<div style="left:1193px;top:985px;width:726px;height:20px;background:#f3f3f3"></div>
<svg style="position:absolute;left:1201px;top:987px;" width="16" height="16" viewBox="0 0 16 16"><circle cx="8" cy="8" r="7" fill="none" stroke="#7a8080" stroke-width="1.1"/><path d="M8,4V5.6 M8,7.2V8.8 M8,10.4V12" stroke="#444" stroke-width="1.7"/></svg>
<div style="left:1222px;top:987px;white-space:nowrap;font-size:12px;color:#000;font-weight:bold;line-height:16px">Pétrole US Brut Léger</div>
<svg style="position:absolute;left:1417px;top:991px;" width="8" height="8" viewBox="0 0 8 8"><path d="M0,0 L4,8 L8,0 Z" fill="#e8141a"/></svg>
<div style="left:1429px;top:988px;white-space:nowrap;font-size:12px;color:#c3161c;line-height:15px">0,49 %</div>
<div style="left:1459px;top:988px;white-space:nowrap;font-size:12px;color:#c3161c;line-height:15px;width:80px;text-align:right">37</div>
<div style="left:1550px;top:987px;white-space:nowrap;font-size:12px;color:#111;line-height:15px;width:90px;text-align:right">73,688</div>
<div style="left:1649px;top:987px;white-space:nowrap;font-size:12px;color:#111;line-height:15px;width:90px;text-align:right">74,750</div>
<div style="left:1730px;top:988px;white-space:nowrap;font-size:12px;color:#4a3514;line-height:15px;width:90px;text-align:right">74,229</div>
<div style="left:1815px;top:988px;white-space:nowrap;font-size:12px;color:#1d4c5c;line-height:15px;width:90px;text-align:right">74,259</div>
<div style="left:1193px;top:1005px;width:726px;height:20px;background:#fff"></div>
<svg style="position:absolute;left:1201px;top:1007px;" width="16" height="16" viewBox="0 0 16 16"><circle cx="8" cy="8" r="7" fill="none" stroke="#7a8080" stroke-width="1.1"/><path d="M8,4V5.6 M8,7.2V8.8 M8,10.4V12" stroke="#444" stroke-width="1.7"/></svg>
<div style="left:1222px;top:1007px;white-space:nowrap;font-size:12px;color:#000;font-weight:bold;line-height:16px">Gaz Naturel</div>
<svg style="position:absolute;left:1417px;top:1011px;" width="8" height="8" viewBox="0 0 8 8"><path d="M0,8 L4,0 L8,8 Z" fill="#2f8a12"/></svg>
<div style="left:1429px;top:1008px;white-space:nowrap;font-size:12px;color:#3b8c12;line-height:15px">1,42 %</div>
<div style="left:1459px;top:1008px;white-space:nowrap;font-size:12px;color:#3b8c12;line-height:15px;width:80px;text-align:right">2,9</div>
<div style="left:1550px;top:1007px;white-space:nowrap;font-size:12px;color:#111;line-height:15px;width:90px;text-align:right">2,031</div>
<div style="left:1649px;top:1007px;white-space:nowrap;font-size:12px;color:#111;line-height:15px;width:90px;text-align:right">2,103</div>
<div style="left:1730px;top:1008px;white-space:nowrap;font-size:12px;color:#4a3514;line-height:15px;width:90px;text-align:right">2,065</div>
<div style="left:1815px;top:1008px;white-space:nowrap;font-size:12px;color:#1d4c5c;line-height:15px;width:90px;text-align:right">2,068</div>
<div style="left:1193px;top:1025px;width:726px;height:20px;background:#f3f3f3"></div>
<svg style="position:absolute;left:1201px;top:1027px;" width="16" height="16" viewBox="0 0 16 16"><circle cx="8" cy="8" r="7" fill="none" stroke="#7a8080" stroke-width="1.1"/><path d="M8,4V5.6 M8,7.2V8.8 M8,10.4V12" stroke="#444" stroke-width="1.7"/></svg>
<div style="left:1222px;top:1027px;white-space:nowrap;font-size:12px;color:#000;font-weight:bold;line-height:16px">Cuivre</div>
<svg style="position:absolute;left:1417px;top:1031px;" width="8" height="8" viewBox="0 0 8 8"><path d="M0,0 L4,8 L8,0 Z" fill="#e8141a"/></svg>
<div style="left:1429px;top:1028px;white-space:nowrap;font-size:12px;color:#c3161c;line-height:15px">1,04 %</div>
<div style="left:1459px;top:1028px;white-space:nowrap;font-size:12px;color:#c3161c;line-height:15px;width:80px;text-align:right">43,8</div>
<div style="left:1550px;top:1027px;white-space:nowrap;font-size:12px;color:#111;line-height:15px;width:90px;text-align:right">412,22</div>
<div style="left:1649px;top:1027px;white-space:nowrap;font-size:12px;color:#111;line-height:15px;width:90px;text-align:right">418,93</div>
<div style="left:1730px;top:1028px;white-space:nowrap;font-size:12px;color:#4a3514;line-height:15px;width:90px;text-align:right">413,41</div>
<div style="left:1815px;top:1028px;white-space:nowrap;font-size:12px;color:#1d4c5c;line-height:15px;width:90px;text-align:right">413,61</div>
<div style="left:1193px;top:925px;width:726px;height:1px;background:#e0e0e0"></div>
<div style="left:0px;top:0px;width:1920px;height:51px;background:#fff"></div>
<svg style="position:absolute;left:0px;top:0px;" width="40" height="40" viewBox="0 0 40 40"><path d="M14,15.3 Q17.8,15.5 19.2,19.5 L19.2,36.8 Q19.2,37.7 18.3,37.7 L14,37.7 Z M21.7,15.3 Q25.5,15.5 27,19.5 L27,36.8 Q27,37.7 26.1,37.7 L21.7,37.7 Z M35,13 L35,36.8 Q35,37.7 34.1,37.7 L29.7,37.7 L29.7,16.5 Q31.5,13.3 35,13 Z" fill="#10bcdc"/></svg>
<div style="left:49px;top:10px;white-space:nowrap;font-size:14px;color:#111;line-height:16px">CFD</div>
<div style="left:49px;top:28px;white-space:nowrap;font-size:10px;color:#2f6f8f;line-height:12px">Demo 13201555</div>
<div style="left:140px;top:0px;width:50px;height:51px;background:#00aec9"></div>
<svg style="position:absolute;left:155px;top:14px;" width="22" height="22" viewBox="0 0 22 22"><circle cx="9" cy="9" r="6.5" fill="none" stroke="#fff" stroke-width="1.6"/><line x1="13.7" y1="13.7" x2="19" y2="19" stroke="#fff" stroke-width="1.8"/></svg>
<div style="left:213px;top:5px;white-space:nowrap;font-size:11px;color:#2b8cf0;line-height:14px">Indices</div>
<div style="left:292px;top:5px;white-space:nowrap;font-size:11px;color:#111;line-height:14px">Devises</div>
<svg style="position:absolute;left:362px;top:5px;" width="16" height="16" viewBox="0 0 16 16"><path d="M8,2V14M2,8H14" stroke="#555" stroke-width="1.6"/></svg>
<svg style="position:absolute;left:398px;top:4px;" width="20" height="18" viewBox="0 0 20 18"><rect x="2" y="3" width="7" height="12" rx="3.5" fill="none" stroke="#666" stroke-width="1.2"/><line x1="2" y1="8" x2="9" y2="8" stroke="#666" stroke-width="1"/><line x1="5.5" y1="3" x2="5.5" y2="8" stroke="#666" stroke-width="1"/><path d="M12,4 L13.5,5.5 L17,1.5" fill="none" stroke="#666" stroke-width="1"/></svg>
<div style="left:190px;top:25px;width:1330px;height:26px;background:#e8ecee;border-top:1px solid #c9ced2"></div>
<svg style="position:absolute;left:203px;top:29px;" width="18" height="18" viewBox="0 0 18 18"><path d="M2,3 L9,1 L9,15 L2,17 Z M9,1 L13,2 L13,15 L9,15" fill="none" stroke="#333" stroke-width="1.1"/><path d="M11,1.5 L11,15" stroke="#333" stroke-width="1"/></svg>
<div style="left:224px;top:31px;white-space:nowrap;font-size:12px;color:#333;line-height:16px">Produits</div>
<div style="left:278px;top:26px;width:1px;height:25px;background:#c9ced2"></div>
<svg style="position:absolute;left:290px;top:29px;" width="18" height="18" viewBox="0 0 18 18"><circle cx="2" cy="4" r="1.4" fill="#333"/><circle cx="2" cy="9" r="1.4" fill="#333"/><circle cx="2" cy="14" r="1.4" fill="#333"/><path d="M5,4H16M5,9H16M5,14H16" stroke="#333" stroke-width="1.6"/></svg>
<div style="left:313px;top:31px;white-space:nowrap;font-size:12px;color:#333;line-height:16px">Liste de Favoris</div>
<div style="left:408px;top:26px;width:1px;height:25px;background:#c9ced2"></div>
<svg style="position:absolute;left:420px;top:29px;" width="18" height="18" viewBox="0 0 18 18"><path d="M1,5 L5,1 L10,1 L17,9 L10,16 L1,7 Z" fill="#333"/><circle cx="5" cy="5" r="1.3" fill="#e8ecee"/><text x="7" y="12" font-size="7" fill="#e8ecee" font-family="Liberation Sans">$</text></svg>
<div style="left:443px;top:31px;white-space:nowrap;font-size:12px;color:#333;line-height:16px">Compte</div>
<div style="left:495px;top:26px;width:1px;height:25px;background:#c9ced2"></div>
<svg style="position:absolute;left:507px;top:29px;" width="18" height="18" viewBox="0 0 18 18"><rect x="1.5" y="1.5" width="11" height="15" fill="none" stroke="#333" stroke-width="1.2"/><path d="M3.5,4H10.5M3.5,7H6M7.5,7H10.5M3.5,10H10.5M3.5,13H10.5" stroke="#333" stroke-width="1.2"/></svg>
<div style="left:530px;top:31px;white-space:nowrap;font-size:12px;color:#333;line-height:16px">News &amp; Analyses</div>
<div style="left:632px;top:26px;width:1px;height:25px;background:#c9ced2"></div>
<svg style="position:absolute;left:643px;top:29px;" width="18" height="18" viewBox="0 0 18 18"><path d="M1,5V1H5M13,1H17V5M17,13V17H13M5,17H1V13" fill="none" stroke="#333" stroke-width="1.1"/><path d="M3,14 L7,9 L10,11 L14,5" fill="none" stroke="#333" stroke-width="1.8"/><path d="M12,4 L15,4 L15,7" fill="none" stroke="#333" stroke-width="1.2"/></svg>
<div style="left:667px;top:31px;white-space:nowrap;font-size:12px;color:#333;line-height:16px">Scanner de motifs</div>
<div style="left:774px;top:26px;width:1px;height:25px;background:#c9ced2"></div>
<svg style="position:absolute;left:785px;top:29px;" width="18" height="18" viewBox="0 0 18 18"><path d="M1,7 L9,4 L17,7 L9,10 Z" fill="none" stroke="#333" stroke-width="1.2"/><path d="M4,8.5V12 Q9,15 14,12V8.5" fill="none" stroke="#333" stroke-width="1.2"/></svg>
<div style="left:809px;top:31px;white-space:nowrap;font-size:12px;color:#333;line-height:16px">Apprendre</div>
<div style="left:875px;top:26px;width:1px;height:25px;background:#c9ced2"></div>
<svg style="position:absolute;left:886px;top:29px;" width="18" height="18" viewBox="0 0 18 18"><circle cx="9" cy="9" r="5" fill="none" stroke="#333" stroke-width="3"/><path d="M9,1V17M1,9H17M3.3,3.3L14.7,14.7M14.7,3.3L3.3,14.7" stroke="#333" stroke-width="2.6"/><circle cx="9" cy="9" r="2.5" fill="#e8ecee"/></svg>
<div style="left:910px;top:31px;white-space:nowrap;font-size:12px;color:#333;line-height:16px">Réglages</div>
<div style="left:971px;top:26px;width:1px;height:25px;background:#c9ced2"></div>
<svg style="position:absolute;left:982px;top:29px;" width="18" height="18" viewBox="0 0 18 18"><rect x="1" y="3" width="16" height="12" fill="none" stroke="#333" stroke-width="1.3"/><rect x="1" y="3" width="16" height="3" fill="#333"/></svg>
<div style="left:1006px;top:31px;white-space:nowrap;font-size:12px;color:#333;line-height:16px">Fenêtres</div>
<div style="left:1063px;top:26px;width:1px;height:25px;background:#c9ced2"></div>
<div style="left:0px;top:51px;width:1920px;height:1px;background:#a3aeb9"></div>
<div style="left:0px;top:52px;width:1920px;height:1px;background:#fff"></div>
<div style="left:1520px;top:0px;width:125px;height:51px;background:#00aec9"></div>
<svg style="position:absolute;left:1534px;top:16px;" width="22" height="20" viewBox="0 0 22 20"><rect x="1.5" y="2.5" width="18.5" height="13" rx="1.5" fill="none" stroke="#fff" stroke-width="1.4"/><line x1="1.5" y1="6" x2="20" y2="6" stroke="#fff" stroke-width="1.6"/><rect x="15.5" y="10" width="3" height="3" fill="#fff"/></svg>
<div style="left:1564px;top:8px;white-space:nowrap;font-size:14px;color:#fff;line-height:16px">Ajouter</div>
<div style="left:1564px;top:25px;white-space:nowrap;font-size:14px;color:#fff;line-height:16px">des Fonds</div>
<div style="left:1645px;top:0px;width:177px;height:51px;background:#eeeff1"></div>
<div style="left:1661px;top:17px;white-space:nowrap;font-size:11.5px;color:#777;line-height:16px">Afficher le Récap. du Compte</div>
<div style="left:1822px;top:0px;width:18px;height:51px;background:#fff;border-left:1px solid #dde0e3"></div>
<svg style="position:absolute;left:1826px;top:19px;" width="10" height="12" viewBox="0 0 10 12"><path d="M6.5,2 L3,6 L6.5,10" fill="none" stroke="#555" stroke-width="1.8"/></svg>
<div style="left:1840px;top:0px;width:80px;height:25px;background:#fff;border-left:1px solid #dde0e3"></div>
<div style="left:1850px;top:5px;white-space:nowrap;font-size:12.5px;color:#555;letter-spacing:1.8px;line-height:16px">14:26:48</div>
<div style="left:1840px;top:25px;width:80px;height:26px;background:#eef0f2;border-left:1px solid #dde0e3;border-top:1px solid #d0d5d9"></div>
<div style="left:1880px;top:25px;width:1px;height:26px;background:#d0d5d9"></div>
<svg style="position:absolute;left:1851px;top:29px;" width="20" height="20" viewBox="0 0 20 20"><circle cx="10" cy="10" r="8" fill="none" stroke="#222" stroke-width="1.5"/><circle cx="10" cy="6" r="1.3" fill="#222"/><path d="M8.5,9H10.5V14.5M8.5,14.5H12" stroke="#222" stroke-width="1.6" fill="none"/></svg>
<svg style="position:absolute;left:1891px;top:29px;" width="20" height="20" viewBox="0 0 20 20"><path d="M6,5.5 A7,7 0 1 0 14,5.5" fill="none" stroke="#222" stroke-width="1.5"/><line x1="10" y1="2" x2="10" y2="10" stroke="#222" stroke-width="1.5"/></svg>
</body></html>
